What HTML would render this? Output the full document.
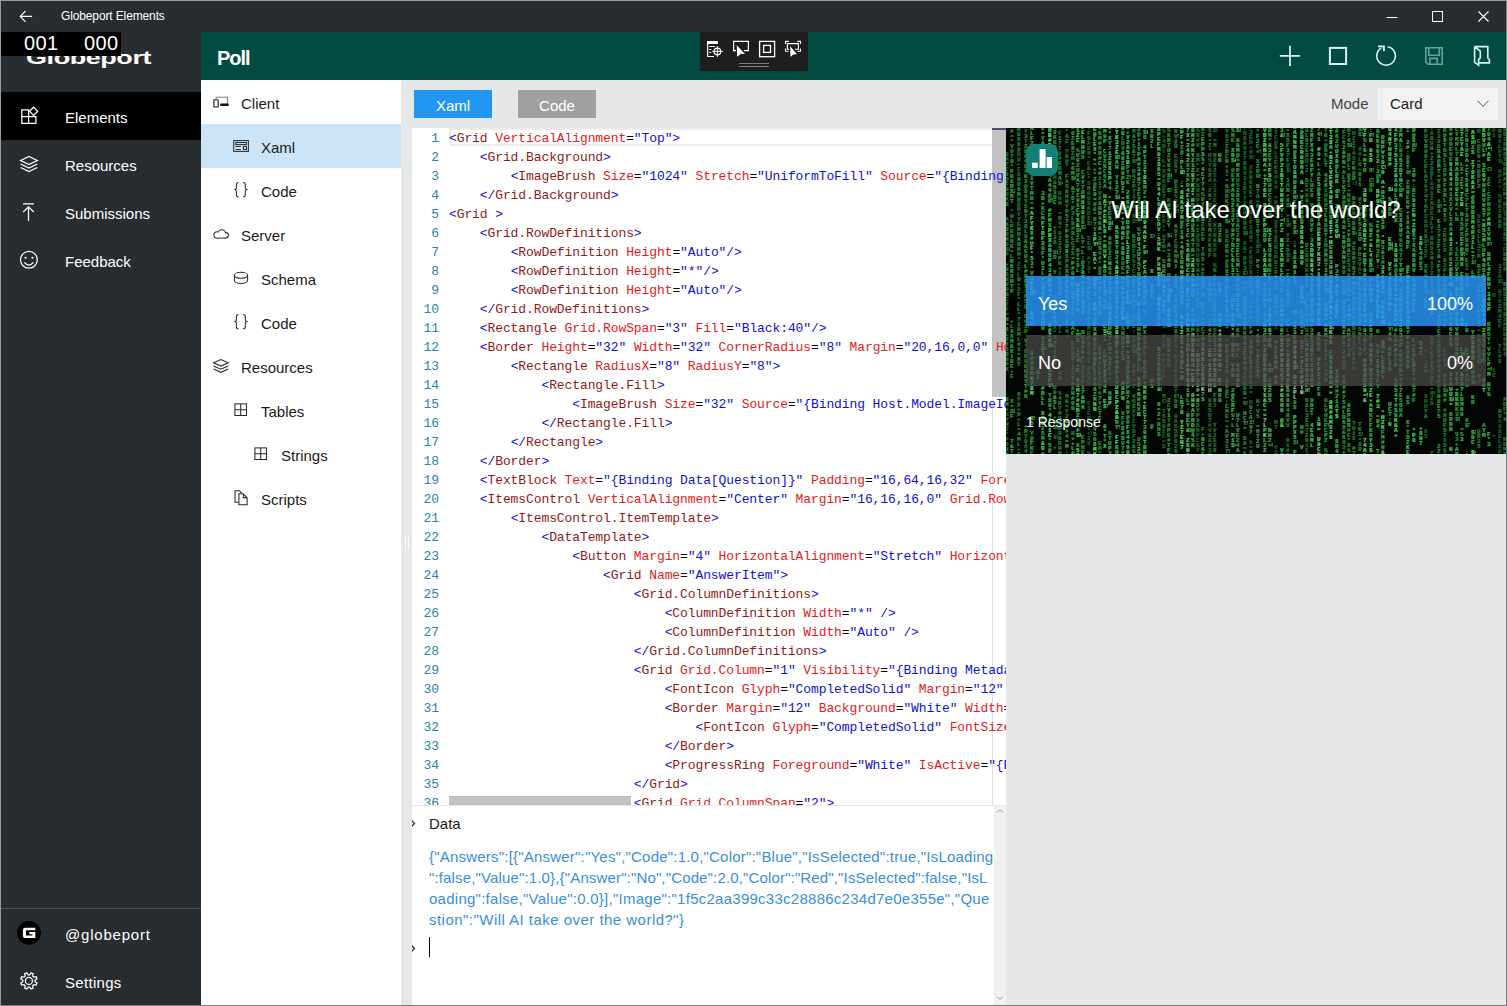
<!DOCTYPE html>
<html><head><meta charset="utf-8">
<style>
*{box-sizing:border-box;margin:0;padding:0}
html,body{width:1507px;height:1006px;overflow:hidden;background:#282d31;font-family:"Liberation Sans",sans-serif}
.a{position:absolute}
svg{position:absolute;overflow:visible}
#win{left:0;top:0;width:1507px;height:1006px;border:1px solid #959b9f;border-right-color:#7c7c7c;border-bottom-color:#7c7c7c}
#title{left:1px;top:1px;width:1505px;height:31px;background:#282d31;color:#fff}
#side{left:1px;top:32px;width:200px;height:973px;background:#282d31;color:#fff}
#hdr{left:201px;top:32px;width:1305px;height:48px;background:#034a40}
#tree{left:201px;top:80px;width:200px;height:925px;background:#fff}
#gray{left:401px;top:80px;width:1105px;height:925px;background:#e6e7e9}
#ed{left:412px;top:128px;width:594px;height:677px;background:#fff;overflow:hidden}
#data{left:412px;top:806px;width:594px;height:199px;background:#fff;overflow:hidden}
#card{left:1006px;top:128px;width:500px;height:326px;background:#020503;overflow:hidden}
.si{position:absolute;left:0;width:200px;height:48px}
.si .t{position:absolute;left:64px;top:17px;font-size:15px;line-height:18px;color:#fff}
.ti{position:absolute;left:0;width:200px;height:44px}
.ti .t{position:absolute;top:15px;font-size:15px;line-height:18px;color:#1b1b1b}
#code,#nums{position:absolute;top:1px;font-family:"Liberation Mono",monospace;font-size:13px;line-height:19px;letter-spacing:-0.1px;white-space:pre}
#code{left:37px;color:#000}
#nums{left:0;width:27px;text-align:right;color:#2a84a2;letter-spacing:0}
#code b{font-weight:normal;color:#1010d0}
#code i{font-style:normal;color:#8e1a1a}
#code u{text-decoration:none;color:#e01c1c}
#mx{position:absolute;left:0;top:0;width:500px;height:325px}
#mx p{position:absolute;top:0;width:6px;height:325px}
#mx i{position:absolute;left:0;width:5px;font:bold 6px/5px "Liberation Mono",monospace;text-shadow:0 0 1px currentColor;word-break:break-all;font-style:normal;overflow:hidden}
</style></head><body>
<div class="a" id="win"></div>
<div class="a" id="title">
  <svg style="left:18px;top:8px" width="14" height="14" viewBox="0 0 14 14"><path d="M13.1 7.4H1.2M6.6 2L1.2 7.4L6.6 12.8" stroke="#fff" stroke-width="1.1" fill="none"/></svg>
  <div class="a" style="left:60px;top:8px;font-size:12px;line-height:14px;letter-spacing:-0.13px">Globeport Elements</div>
  <!-- window controls -->
  <svg style="left:1384px;top:10px" width="14" height="14"><path d="M1.5 6.5H12.5" stroke="#fff" stroke-width="1"/></svg>
  <svg style="left:1430px;top:9px" width="14" height="14"><rect x="1.5" y="1.5" width="10" height="10" stroke="#fff" stroke-width="1" fill="none"/></svg>
  <svg style="left:1476px;top:9px" width="14" height="14"><path d="M1.5 1.5L11.5 11.5M11.5 1.5L1.5 11.5" stroke="#fff" stroke-width="1.1"/></svg>
</div>
<div class="a" id="side">
  <div class="a" style="left:25px;top:16px;font-size:19px;line-height:20px;font-weight:bold;color:#fff;transform:scaleX(1.42);transform-origin:0 0;letter-spacing:-0.3px">Globeport</div>
  <div class="a" style="left:0;top:0;width:120px;height:24px;background:#000"></div>
  <div class="a" style="left:23px;top:1px;font-size:20px;line-height:20px;color:#fff;letter-spacing:0.4px">001</div>
  <div class="a" style="left:83px;top:1px;font-size:20px;line-height:20px;color:#fff;letter-spacing:0.4px">000</div>
  <div class="si" style="top:60px;background:#000"><div class="t">Elements</div></div>
  <div class="si" style="top:108px"><div class="t">Resources</div></div>
  <div class="si" style="top:156px"><div class="t">Submissions</div></div>
  <div class="si" style="top:204px"><div class="t">Feedback</div></div>
  <div class="a" style="left:0;top:876px;width:200px;height:1px;background:#4a4e52"></div>
  <div class="si" style="top:878px"><div class="t" style="top:16px;letter-spacing:0.8px">@globeport</div></div>
  <div class="si" style="top:926px"><div class="t" style="top:16px;letter-spacing:0.3px">Settings</div></div>
</div>
<div class="a" id="hdr">
  <div class="a" style="left:16px;top:15px;font-size:20px;line-height:22px;color:#fff;font-weight:bold;letter-spacing:-1px">Poll</div>
</div>
<div class="a" id="tree">
  <div class="ti" style="top:0"><div class="t" style="left:40px">Client</div></div>
  <div class="ti" style="top:44px;background:#cce4f7"><div class="t" style="left:60px">Xaml</div></div>
  <div class="ti" style="top:88px"><div class="t" style="left:60px">Code</div></div>
  <div class="ti" style="top:132px"><div class="t" style="left:40px">Server</div></div>
  <div class="ti" style="top:176px"><div class="t" style="left:60px">Schema</div></div>
  <div class="ti" style="top:220px"><div class="t" style="left:60px">Code</div></div>
  <div class="ti" style="top:264px"><div class="t" style="left:40px">Resources</div></div>
  <div class="ti" style="top:308px"><div class="t" style="left:60px">Tables</div></div>
  <div class="ti" style="top:352px"><div class="t" style="left:80px">Strings</div></div>
  <div class="ti" style="top:396px"><div class="t" style="left:60px">Scripts</div></div>
</div>
<div class="a" id="gray">
  <div class="a" style="left:4px;top:455px;width:1px;height:15px;background:#fbfbfb"></div><div class="a" style="left:7px;top:455px;width:1px;height:15px;background:#fbfbfb"></div>
  <div class="a" style="left:13px;top:10px;width:78px;height:28px;background:#2196f3;color:#fff;font-size:15px;line-height:32px;text-align:center">Xaml</div>
  <div class="a" style="left:117px;top:10px;width:78px;height:28px;background:#a0a0a0;color:#fff;font-size:15px;line-height:32px;text-align:center">Code</div>
  <div class="a" style="left:930px;top:15px;font-size:15px;line-height:18px;color:#444">Mode</div>
  <div class="a" style="left:977px;top:8px;width:120px;height:32px;background:#f2f2f2"></div>
  <div class="a" style="left:989px;top:15px;font-size:15px;line-height:18px;color:#1b1b1b">Card</div>
  <svg style="left:1075px;top:19px" width="14" height="10"><path d="M1.5 1.8L7 7.3L12.5 1.8" stroke="#555" stroke-width="1" fill="none"/></svg>
</div>
<div class="a" id="ed">
  <div class="a" style="left:37px;top:0;width:557px;height:18px;border:2px solid #ececec;border-right:none"></div>
  <div class="a" style="left:580px;top:0;width:14px;height:269px;background:#c2c2c2;border-top:2px solid #4b4f68"></div>
  <div class="a" style="left:580px;top:269px;width:1px;height:408px;background:#e0e0e0"></div>
  <pre id="code"><b>&lt;</b><i>Grid</i> <u>VerticalAlignment</u>=<b>&quot;Top&quot;</b><b>&gt;</b>
    <b>&lt;</b><i>Grid.Background</i><b>&gt;</b>
        <b>&lt;</b><i>ImageBrush</i> <u>Size</u>=<b>&quot;1024&quot;</b> <u>Stretch</u>=<b>&quot;UniformToFill&quot;</b> <u>Source</u>=<b>&quot;{Binding Host.Model.ImageId}&quot;</b><b>/&gt;</b>
    <b>&lt;/</b><i>Grid.Background</i><b>&gt;</b>
<b>&lt;</b><i>Grid</i> <b>&gt;</b>
    <b>&lt;</b><i>Grid.RowDefinitions</i><b>&gt;</b>
        <b>&lt;</b><i>RowDefinition</i> <u>Height</u>=<b>&quot;Auto&quot;</b><b>/&gt;</b>
        <b>&lt;</b><i>RowDefinition</i> <u>Height</u>=<b>&quot;*&quot;</b><b>/&gt;</b>
        <b>&lt;</b><i>RowDefinition</i> <u>Height</u>=<b>&quot;Auto&quot;</b><b>/&gt;</b>
    <b>&lt;/</b><i>Grid.RowDefinitions</i><b>&gt;</b>
    <b>&lt;</b><i>Rectangle</i> <u>Grid.RowSpan</u>=<b>&quot;3&quot;</b> <u>Fill</u>=<b>&quot;Black:40&quot;</b><b>/&gt;</b>
    <b>&lt;</b><i>Border</i> <u>Height</u>=<b>&quot;32&quot;</b> <u>Width</u>=<b>&quot;32&quot;</b> <u>CornerRadius</u>=<b>&quot;8&quot;</b> <u>Margin</u>=<b>&quot;20,16,0,0&quot;</b> <u>HorizontalAlignment</u>=<b>&quot;Left&quot;</b><b>/&gt;</b>
        <b>&lt;</b><i>Rectangle</i> <u>RadiusX</u>=<b>&quot;8&quot;</b> <u>RadiusY</u>=<b>&quot;8&quot;</b><b>&gt;</b>
            <b>&lt;</b><i>Rectangle.Fill</i><b>&gt;</b>
                <b>&lt;</b><i>ImageBrush</i> <u>Size</u>=<b>&quot;32&quot;</b> <u>Source</u>=<b>&quot;{Binding Host.Model.ImageId}&quot;</b><b>/&gt;</b>
            <b>&lt;/</b><i>Rectangle.Fill</i><b>&gt;</b>
        <b>&lt;/</b><i>Rectangle</i><b>&gt;</b>
    <b>&lt;/</b><i>Border</i><b>&gt;</b>
    <b>&lt;</b><i>TextBlock</i> <u>Text</u>=<b>&quot;{Binding Data[Question]}&quot;</b> <u>Padding</u>=<b>&quot;16,64,16,32&quot;</b> <u>Foreground</u>=<b>&quot;White&quot;</b><b>/&gt;</b>
    <b>&lt;</b><i>ItemsControl</i> <u>VerticalAlignment</u>=<b>&quot;Center&quot;</b> <u>Margin</u>=<b>&quot;16,16,16,0&quot;</b> <u>Grid.Row</u>=<b>&quot;1&quot;</b><b>&gt;</b>
        <b>&lt;</b><i>ItemsControl.ItemTemplate</i><b>&gt;</b>
            <b>&lt;</b><i>DataTemplate</i><b>&gt;</b>
                <b>&lt;</b><i>Button</i> <u>Margin</u>=<b>&quot;4&quot;</b> <u>HorizontalAlignment</u>=<b>&quot;Stretch&quot;</b> <u>HorizontalContentAlignment</u>=<b>&quot;Stretch&quot;</b><b>&gt;</b>
                    <b>&lt;</b><i>Grid</i> <u>Name</u>=<b>&quot;AnswerItem&quot;</b><b>&gt;</b>
                        <b>&lt;</b><i>Grid.ColumnDefinitions</i><b>&gt;</b>
                            <b>&lt;</b><i>ColumnDefinition</i> <u>Width</u>=<b>&quot;*&quot;</b> <b>/&gt;</b>
                            <b>&lt;</b><i>ColumnDefinition</i> <u>Width</u>=<b>&quot;Auto&quot;</b> <b>/&gt;</b>
                        <b>&lt;/</b><i>Grid.ColumnDefinitions</i><b>&gt;</b>
                        <b>&lt;</b><i>Grid</i> <u>Grid.Column</u>=<b>&quot;1&quot;</b> <u>Visibility</u>=<b>&quot;{Binding Metadata}&quot;</b><b>&gt;</b>
                            <b>&lt;</b><i>FontIcon</i> <u>Glyph</u>=<b>&quot;CompletedSolid&quot;</b> <u>Margin</u>=<b>&quot;12&quot;</b> <b>/&gt;</b>
                            <b>&lt;</b><i>Border</i> <u>Margin</u>=<b>&quot;12&quot;</b> <u>Background</u>=<b>&quot;White&quot;</b> <u>Width</u>=<b>&quot;16&quot;</b><b>&gt;</b>
                                <b>&lt;</b><i>FontIcon</i> <u>Glyph</u>=<b>&quot;CompletedSolid&quot;</b> <u>FontSize</u>=<b>&quot;16&quot;</b><b>/&gt;</b>
                            <b>&lt;/</b><i>Border</i><b>&gt;</b>
                            <b>&lt;</b><i>ProgressRing</i> <u>Foreground</u>=<b>&quot;White&quot;</b> <u>IsActive</u>=<b>&quot;{Binding}&quot;</b><b>/&gt;</b>
                        <b>&lt;/</b><i>Grid</i><b>&gt;</b>
                        <b>&lt;</b><i>Grid</i> <u>Grid.ColumnSpan</u>=<b>&quot;2&quot;</b><b>&gt;</b></pre>
<pre id="nums">1
2
3
4
5
6
7
8
9
10
11
12
13
14
15
16
17
18
19
20
21
22
23
24
25
26
27
28
29
30
31
32
33
34
35
36</pre>

  <div class="a" style="left:37px;top:668px;width:182px;height:9px;background:#c2c2c2"></div>
</div>
<div class="a" id="data">
  <div class="a" style="left:0;top:-1px;width:594px;height:1px;background:#9c9c9c"></div>
  <div class="a" style="left:582px;top:0;width:12px;height:199px;background:#f0f0f0"></div>
  <svg style="left:584px;top:2px" width="8" height="6"><path d="M1 4.5L4 1.5L7 4.5" stroke="#9a9a9a" stroke-width="1" fill="none"/></svg>
  <svg style="left:584px;top:189px" width="8" height="6"><path d="M1 1.5L4 4.5L7 1.5" stroke="#9a9a9a" stroke-width="1" fill="none"/></svg>
  <svg style="left:-3px;top:12px" width="8" height="12"><path d="M1.8 1.8L5.5 5.5L1.8 9.2" stroke="#333" stroke-width="1.3" fill="none"/></svg>
  <div class="a" style="left:17px;top:9px;font-size:15px;line-height:18px;color:#1b1b1b">Data</div>
  <div class="a" id="json" style="left:17px;top:40px;width:590px;font-size:15px;line-height:21px;color:#3a8fd8;white-space:pre"><span style="letter-spacing:0.21px">{"Answers":[{"Answer":"Yes","Code":1.0,"Color":"Blue","IsSelected":true,"IsLoading</span>
<span style="letter-spacing:0.15px">":false,"Value":1.0},{"Answer":"No","Code":2.0,"Color":"Red","IsSelected":false,"IsL</span>
<span style="letter-spacing:0.26px">oading":false,"Value":0.0}],"Image":"1f5c2aa399c33c28886c234d7e0e355e","Que</span>
<span style="letter-spacing:0.47px">stion":"Will AI take over the world?"}</span></div>
  <svg style="left:-3px;top:137px" width="8" height="12"><path d="M1.8 1.8L5.5 5.5L1.8 9.2" stroke="#333" stroke-width="1.3" fill="none"/></svg>
  <div class="a" style="left:17px;top:131px;width:1px;height:20px;background:#000"></div>
</div>
<div class="a" id="card">
  <div id="mx"><p style="left:-1px"><i style="top:24px;height:20px;color:#1f6d2a">3A7T</i><i style="top:44px;height:20px;color:#21722c">6@F0</i><i style="top:64px;height:10px;color:#1e6b29">UA</i><i style="top:74px;height:5px;color:#247b31">8</i><i style="top:89px;height:5px;color:#1f6c29">A</i><i style="top:94px;height:10px;color:#2a8837">%D</i><i style="top:104px;height:10px;color:#267e32">UM</i><i style="top:114px;height:5px;color:#1e6a28">9</i><i style="top:119px;height:15px;color:#206f2b">$0P</i><i style="top:134px;height:5px;color:#288335">+</i><i style="top:139px;height:15px;color:#22762e">B3H</i><i style="top:154px;height:5px;color:#21722c">V</i><i style="top:159px;height:5px;color:#22742d">U</i><i style="top:164px;height:25px;color:#22752e">BC7F=</i><i style="top:189px;height:15px;color:#298536">H=6</i><i style="top:204px;height:25px;color:#278234">L2Y5D</i><i style="top:229px;height:15px;color:#21722c">9PK</i><i style="top:269px;height:15px;color:#278234">9M+</i><i style="top:284px;height:10px;color:#1d6727">%V</i><i style="top:294px;height:5px;color:#247a30">H</i><i style="top:299px;height:20px;color:#1e6a28">2*PD</i><i style="top:319px;height:10px;color:#247930">8X</i></p><p style="left:4px"><i style="top:-4px;height:20px;color:#298536">A#=*</i><i style="top:16px;height:15px;color:#267e32">V97</i><i style="top:31px;height:20px;color:#2a8938">B*PB</i><i style="top:51px;height:5px;color:#2a8837">&</i><i style="top:56px;height:25px;color:#30953e">R$2MT</i><i style="top:81px;height:25px;color:#267e32">*HLPB</i><i style="top:106px;height:25px;color:#298636">HNK=L</i><i style="top:131px;height:25px;color:#30953f">RKRXR</i><i style="top:156px;height:10px;color:#2d903c">TP</i><i style="top:191px;height:10px;color:#278134">+L</i><i style="top:201px;height:5px;color:#2e923d">A</i><i style="top:206px;height:25px;color:#2b8b39">XM&K1</i><i style="top:231px;height:10px;color:#298536">BE</i><i style="top:241px;height:10px;color:#21732d">+E</i><i style="top:271px;height:10px;color:#2b8a38">X=</i><i style="top:281px;height:15px;color:#2c8d3a">$DF</i><i style="top:311px;height:20px;color:#319840">7&T2</i></p><p style="left:11px"><i style="top:-1px;height:25px;color:#267e32">R8XX@</i><i style="top:24px;height:25px;color:#1f6d2a">U@+C8</i><i style="top:49px;height:25px;color:#2a8837">0U6N@</i><i style="top:74px;height:25px;color:#22742d">@UYYE</i><i style="top:99px;height:20px;color:#2c8e3b">UUAH</i><i style="top:119px;height:15px;color:#23782f">NM*</i><i style="top:134px;height:15px;color:#1d6828">ZFL</i><i style="top:149px;height:5px;color:#2a8837">0</i><i style="top:154px;height:20px;color:#21722c">+2F*</i><i style="top:174px;height:15px;color:#288435">LL*</i><i style="top:189px;height:25px;color:#257c31">718ML</i><i style="top:214px;height:25px;color:#268033">#1=RT</i><i style="top:264px;height:5px;color:#247930">6</i><i style="top:269px;height:25px;color:#23782f">Y@+U+</i><i style="top:294px;height:20px;color:#288435">L=4M</i><i style="top:314px;height:5px;color:#23782f">L</i><i style="top:319px;height:20px;color:#1f6d2a">+&*P</i></p><p style="left:18px"><i style="top:-4px;height:5px;color:#247b31">5</i><i style="top:1px;height:5px;color:#20712c">Y</i><i style="top:6px;height:5px;color:#2d903c">3</i><i style="top:11px;height:5px;color:#247a30">7</i><i style="top:16px;height:10px;color:#2d903c">Z9</i><i style="top:26px;height:10px;color:#288335">A4</i><i style="top:36px;height:25px;color:#2a8938">U4K3@</i><i style="top:61px;height:25px;color:#278234">80Y5N</i><i style="top:86px;height:25px;color:#268033">T38L9</i><i style="top:111px;height:25px;color:#298737">&&EH4</i><i style="top:136px;height:25px;color:#30963f">L#8FT</i><i style="top:161px;height:20px;color:#23782f">1P5@</i><i style="top:186px;height:5px;color:#288536">U</i><i style="top:191px;height:20px;color:#267f33">#1%U</i><i style="top:211px;height:5px;color:#329b42">Y</i><i style="top:216px;height:10px;color:#22742d">*D</i><i style="top:226px;height:10px;color:#278134">FL</i><i style="top:236px;height:15px;color:#2d903c">UU8</i><i style="top:251px;height:15px;color:#2f943e">YT#</i><i style="top:266px;height:5px;color:#2b8a38">B</i><i style="top:296px;height:10px;color:#298636">+R</i><i style="top:306px;height:5px;color:#267e32">Y</i><i style="top:311px;height:15px;color:#22752e">9A4</i></p><p style="left:24px"><i style="top:-2px;height:25px;color:#36a246">ALF2+</i><i style="top:23px;height:5px;color:#46c159">N</i><i style="top:28px;height:5px;color:#43bc56">+</i><i style="top:33px;height:10px;color:#43bb56">L=</i><i style="top:43px;height:10px;color:#329a41">C1</i><i style="top:53px;height:25px;color:#2f943e">VTMB=</i><i style="top:78px;height:15px;color:#45c059">=AF</i><i style="top:93px;height:10px;color:#4dcd62">YK</i><i style="top:103px;height:5px;color:#3bad4d">X</i><i style="top:108px;height:10px;color:#3fb350">#@</i><i style="top:118px;height:15px;color:#45be58">F*5</i><i style="top:133px;height:20px;color:#349f44">3*V3</i><i style="top:153px;height:5px;color:#3aaa4b">M</i><i style="top:158px;height:5px;color:#4ece62">C</i><i style="top:163px;height:10px;color:#42b954">C%</i><i style="top:183px;height:15px;color:#30953f">A4D</i><i style="top:223px;height:25px;color:#3aab4b">U#80M</i><i style="top:248px;height:20px;color:#4fd164">&78M</i><i style="top:288px;height:15px;color:#37a447">8%5</i><i style="top:303px;height:20px;color:#30953e">Y@FK</i><i style="top:323px;height:5px;color:#35a045">C</i></p><p style="left:30px"><i style="top:242px;height:10px;color:#3cae4d">H1</i></p><p style="left:35px"><i style="top:-2px;height:20px;color:#329b42">E=YA</i><i style="top:18px;height:20px;color:#3db14f">A%+*</i><i style="top:63px;height:10px;color:#36a246">3D</i><i style="top:73px;height:5px;color:#3aab4b">+</i><i style="top:78px;height:15px;color:#30953f">KCM</i><i style="top:93px;height:25px;color:#41b753">FTRF3</i><i style="top:118px;height:25px;color:#339d43">9F*U2</i><i style="top:143px;height:5px;color:#2c8e3b">L</i><i style="top:148px;height:10px;color:#40b652">++</i><i style="top:158px;height:25px;color:#42b954">U06:$</i><i style="top:183px;height:25px;color:#35a045">N1M:U</i><i style="top:208px;height:25px;color:#3eb350">VZ$&3</i><i style="top:258px;height:20px;color:#3bac4c">#DLL</i><i style="top:283px;height:15px;color:#44bd57">XM0</i><i style="top:298px;height:15px;color:#30963f">25M</i><i style="top:313px;height:15px;color:#43bb55">&D+</i></p><p style="left:42px"><i style="top:-5px;height:25px;color:#50d265">UUB#D</i><i style="top:20px;height:25px;color:#38a749">&TF6D</i><i style="top:45px;height:15px;color:#36a347">4A4</i><i style="top:60px;height:20px;color:#35a045">4@@%</i><i style="top:80px;height:20px;color:#3cae4d">#FMX</i><i style="top:100px;height:15px;color:#4dcd61">PBX</i><i style="top:115px;height:5px;color:#37a548">&</i><i style="top:120px;height:25px;color:#3cae4d">N6P43</i><i style="top:145px;height:20px;color:#3fb451">4NC=</i><i style="top:165px;height:20px;color:#35a145">+60C</i><i style="top:195px;height:15px;color:#43bb55">6@Z</i><i style="top:210px;height:15px;color:#4ac75d">&$6</i><i style="top:240px;height:5px;color:#38a749">B</i><i style="top:245px;height:20px;color:#51d466">5FV%</i><i style="top:265px;height:20px;color:#329941">T80*</i><i style="top:285px;height:20px;color:#4fd164">4*L1</i><i style="top:305px;height:5px;color:#51d466">C</i><i style="top:310px;height:15px;color:#37a548">*5@</i></p><p style="left:47px"><i style="top:-3px;height:5px;color:#20712c">X</i><i style="top:2px;height:10px;color:#2d8f3b">9K</i><i style="top:12px;height:5px;color:#278234">B</i><i style="top:17px;height:25px;color:#30953e">F5ZR8</i><i style="top:47px;height:10px;color:#20702b">H&</i><i style="top:57px;height:20px;color:#30953f">53DC</i><i style="top:97px;height:25px;color:#247b31">+:13A</i><i style="top:122px;height:20px;color:#298536">$$2D</i><i style="top:142px;height:5px;color:#2d8f3b">Y</i><i style="top:167px;height:10px;color:#22762e">CY</i><i style="top:177px;height:5px;color:#247930">X</i><i style="top:182px;height:10px;color:#288435">L0</i><i style="top:192px;height:5px;color:#2e913c">4</i><i style="top:197px;height:5px;color:#20712c">X</i><i style="top:202px;height:10px;color:#20702b">*N</i><i style="top:212px;height:25px;color:#288435">4T10B</i><i style="top:257px;height:10px;color:#267f33">D9</i><i style="top:267px;height:15px;color:#329a41">&5L</i><i style="top:287px;height:20px;color:#267f33">+&$Z</i><i style="top:307px;height:10px;color:#22752e">1%</i><i style="top:317px;height:5px;color:#22752e">+</i></p><p style="left:52px"><i style="top:-2px;height:10px;color:#1c6526">:F</i><i style="top:8px;height:5px;color:#288335">1</i><i style="top:13px;height:25px;color:#21732d">7T@#K</i><i style="top:38px;height:25px;color:#298536">UMA$4</i><i style="top:63px;height:20px;color:#1e6a28">U6:M</i><i style="top:83px;height:25px;color:#20712c">=R4*0</i><i style="top:108px;height:25px;color:#23772f">2357P</i><i style="top:133px;height:10px;color:#206f2b">K+</i><i style="top:143px;height:10px;color:#1f6c29">1H</i><i style="top:153px;height:20px;color:#267f33">H$ZB</i><i style="top:198px;height:5px;color:#206f2b">7</i><i style="top:203px;height:5px;color:#257c31">*</i><i style="top:233px;height:25px;color:#247930">E%74$</i><i style="top:263px;height:20px;color:#22762e">%4K7</i><i style="top:283px;height:20px;color:#1f6c29">MM0N</i><i style="top:303px;height:25px;color:#22752e">U9DHN</i></p><p style="left:59px"><i style="top:-4px;height:5px;color:#298737">#</i><i style="top:1px;height:20px;color:#247930">*A:Z</i><i style="top:21px;height:25px;color:#21732d">YK@*:</i><i style="top:46px;height:25px;color:#257d32">FAX&H</i><i style="top:71px;height:15px;color:#23772f">HYR</i><i style="top:86px;height:25px;color:#2d903c">577P6</i><i style="top:111px;height:5px;color:#268033">$</i><i style="top:116px;height:10px;color:#35a045">UB</i><i style="top:126px;height:15px;color:#267f33">XP6</i><i style="top:141px;height:15px;color:#2f943e">XX4</i><i style="top:156px;height:5px;color:#247b31">6</i><i style="top:161px;height:25px;color:#2a8837">4EX1@</i><i style="top:186px;height:25px;color:#23772f">:NT4=</i><i style="top:266px;height:25px;color:#23782f">M&=Y2</i><i style="top:291px;height:10px;color:#35a045">8U</i><i style="top:301px;height:10px;color:#278234">#4</i><i style="top:311px;height:10px;color:#329a41">=M</i><i style="top:321px;height:20px;color:#319840">:HLA</i></p><p style="left:65px"><i style="top:-2px;height:25px;color:#2d8f3b">=6ZE8</i><i style="top:23px;height:10px;color:#23782f">ZH</i><i style="top:33px;height:25px;color:#2f933d">+6M$H</i><i style="top:58px;height:15px;color:#2c8d3a">&7D</i><i style="top:73px;height:5px;color:#2d8f3b">*</i><i style="top:78px;height:25px;color:#278134">P3L8#</i><i style="top:103px;height:20px;color:#288536">8LC2</i><i style="top:123px;height:5px;color:#247b31">X</i><i style="top:128px;height:15px;color:#329b42">=P#</i><i style="top:143px;height:25px;color:#2f943e">0A@*0</i><i style="top:168px;height:25px;color:#319840">T2E%0</i><i style="top:193px;height:20px;color:#30963f">AA:F</i><i style="top:213px;height:20px;color:#298636">EK0D</i><i style="top:233px;height:10px;color:#30963f">:T</i><i style="top:243px;height:20px;color:#267e32">6T&&</i><i style="top:263px;height:20px;color:#30963f">H#09</i><i style="top:303px;height:5px;color:#257c31">B</i><i style="top:308px;height:20px;color:#349e44">++L#</i></p><p style="left:70px"><i style="top:-5px;height:25px;color:#43bb56">D1Z:C</i><i style="top:20px;height:5px;color:#30953e">%</i><i style="top:25px;height:15px;color:#2f933d">V02</i><i style="top:40px;height:20px;color:#2f943e">UVA7</i><i style="top:60px;height:20px;color:#30963f">VZ9X</i><i style="top:80px;height:5px;color:#39a84a">C</i><i style="top:85px;height:15px;color:#44be57">YX&</i><i style="top:100px;height:20px;color:#30953e">$H2C</i><i style="top:120px;height:25px;color:#2e923d">6YT9L</i><i style="top:155px;height:10px;color:#47c25a">0&</i><i style="top:165px;height:20px;color:#43bb56">N5*9</i><i style="top:200px;height:5px;color:#349f44">+</i><i style="top:205px;height:15px;color:#37a447">P%X</i><i style="top:220px;height:10px;color:#3aaa4b">1E</i><i style="top:230px;height:20px;color:#42ba55">4%+E</i><i style="top:250px;height:5px;color:#3bad4d">6</i><i style="top:255px;height:5px;color:#35a145">N</i><i style="top:260px;height:15px;color:#41b854">M7#</i><i style="top:275px;height:5px;color:#44be57">5</i><i style="top:280px;height:5px;color:#44be57">D</i><i style="top:285px;height:20px;color:#36a246">Z@4#</i><i style="top:305px;height:10px;color:#43bb56">$M</i><i style="top:315px;height:5px;color:#329a41">6</i><i style="top:320px;height:10px;color:#47c25a">5P</i></p><p style="left:75px"><i style="top:-3px;height:5px;color:#349f44">2</i><i style="top:2px;height:20px;color:#41b753">ELMH</i><i style="top:22px;height:20px;color:#349f44">R::5</i><i style="top:42px;height:25px;color:#339c42">CVY78</i><i style="top:67px;height:5px;color:#3fb451">M</i><i style="top:72px;height:15px;color:#41b854">6B0</i><i style="top:87px;height:20px;color:#2f943e">@6$3</i><i style="top:107px;height:5px;color:#2f933d">L</i><i style="top:112px;height:15px;color:#2d8f3b">Y=L</i><i style="top:127px;height:10px;color:#35a045">:@</i><i style="top:137px;height:20px;color:#38a648">2BT+</i><i style="top:157px;height:15px;color:#298737">ZKT</i><i style="top:172px;height:15px;color:#41b854">UVZ</i><i style="top:202px;height:25px;color:#2e923d">BX0VN</i><i style="top:227px;height:15px;color:#2b8b39">#=7</i><i style="top:242px;height:15px;color:#2c8d3a">CVF</i><i style="top:257px;height:20px;color:#39a84a">17&M</i><i style="top:277px;height:5px;color:#37a548">A</i><i style="top:307px;height:20px;color:#288536">EPNE</i></p><p style="left:81px"><i style="top:-2px;height:10px;color:#1c6627">7F</i><i style="top:8px;height:5px;color:#1d6827">$</i><i style="top:13px;height:15px;color:#185a21">AKM</i><i style="top:28px;height:5px;color:#185a21">*</i><i style="top:33px;height:5px;color:#1a6024">E</i><i style="top:38px;height:5px;color:#1c6627">&</i><i style="top:43px;height:10px;color:#1b6225">L*</i><i style="top:53px;height:5px;color:#16541f">9</i><i style="top:58px;height:5px;color:#1f6c29">N</i><i style="top:63px;height:15px;color:#1b6325">00$</i><i style="top:78px;height:15px;color:#195d23">KD$</i><i style="top:93px;height:15px;color:#1c6526">$$C</i><i style="top:108px;height:10px;color:#1b6225">5E</i><i style="top:118px;height:10px;color:#1c6526">$D</i><i style="top:128px;height:15px;color:#175720">A7$</i><i style="top:143px;height:25px;color:#1d6727">*EZMH</i><i style="top:168px;height:5px;color:#1b6325">%</i><i style="top:173px;height:5px;color:#1c6426">@</i><i style="top:178px;height:20px;color:#1f6d2a">0M0&</i><i style="top:198px;height:10px;color:#1c6526">MU</i><i style="top:208px;height:15px;color:#1e6a28">P8C</i><i style="top:223px;height:20px;color:#1c6426">61*B</i><i style="top:243px;height:15px;color:#185921">AKV</i><i style="top:273px;height:15px;color:#175620">F1E</i><i style="top:288px;height:15px;color:#195d23">H4+</i><i style="top:303px;height:20px;color:#175720">+%3V</i><i style="top:323px;height:25px;color:#185921">HP:BT</i></p><p style="left:87px"><i style="top:-1px;height:10px;color:#41b853">E@</i><i style="top:9px;height:25px;color:#3fb552">LEX*+</i><i style="top:34px;height:25px;color:#30963f">=+*Z@</i><i style="top:59px;height:10px;color:#349f44">E9</i><i style="top:69px;height:5px;color:#38a749">=</i><i style="top:74px;height:25px;color:#2c8c3a">90*87</i><i style="top:99px;height:5px;color:#2d8f3b">Y</i><i style="top:104px;height:20px;color:#49c75d">1PY%</i><i style="top:124px;height:25px;color:#47c25a">EA*:*</i><i style="top:149px;height:25px;color:#43bc56">$N0*2</i><i style="top:174px;height:10px;color:#49c65d">KM</i><i style="top:184px;height:10px;color:#329a41">4@</i><i style="top:194px;height:20px;color:#39a94a">PXHD</i><i style="top:214px;height:15px;color:#349f44">9FN</i><i style="top:229px;height:15px;color:#49c65d">RFL</i><i style="top:244px;height:5px;color:#39a94a">7</i><i style="top:249px;height:25px;color:#339c43">966ZM</i><i style="top:274px;height:10px;color:#47c25a">NN</i><i style="top:294px;height:20px;color:#2e923d">#V56</i><i style="top:314px;height:5px;color:#3cae4d">8</i><i style="top:319px;height:10px;color:#4ac85e">MK</i></p><p style="left:92px"><i style="top:-2px;height:20px;color:#2e923d">+6M#</i><i style="top:18px;height:5px;color:#288335">6</i><i style="top:23px;height:25px;color:#339d43">U#C+#</i><i style="top:48px;height:25px;color:#23772f">117VX</i><i style="top:73px;height:5px;color:#298536">&</i><i style="top:78px;height:10px;color:#329941">HD</i><i style="top:88px;height:10px;color:#298636">4K</i><i style="top:98px;height:5px;color:#339c42">&</i><i style="top:103px;height:15px;color:#288435">=3B</i><i style="top:118px;height:5px;color:#2a8837">$</i><i style="top:123px;height:10px;color:#247b31">4#</i><i style="top:133px;height:20px;color:#288435">*@8Z</i><i style="top:153px;height:10px;color:#298636">=M</i><i style="top:163px;height:5px;color:#267f33">T</i><i style="top:168px;height:25px;color:#2e913c">4:KTM</i><i style="top:218px;height:15px;color:#2f943e">EU#</i><i style="top:233px;height:20px;color:#257c31">XEB1</i><i style="top:253px;height:15px;color:#22752e">CY#</i><i style="top:268px;height:25px;color:#2d8f3b">7YCTE</i><i style="top:313px;height:5px;color:#267e32">E</i><i style="top:318px;height:15px;color:#267f33">M*N</i></p><p style="left:97px"><i style="top:-4px;height:5px;color:#38a648">5</i><i style="top:1px;height:20px;color:#37a447">M9P:</i><i style="top:21px;height:20px;color:#339b42">CVZK</i><i style="top:41px;height:25px;color:#2e923d">C6XA:</i><i style="top:66px;height:5px;color:#41b753">H</i><i style="top:71px;height:5px;color:#4bca5f">&</i><i style="top:76px;height:15px;color:#44be57">7#E</i><i style="top:91px;height:10px;color:#50d265">NL</i><i style="top:101px;height:10px;color:#45c059">8+</i><i style="top:111px;height:15px;color:#3aab4b">=NH</i><i style="top:126px;height:15px;color:#4fd164">V+&</i><i style="top:141px;height:10px;color:#30953f">65</i><i style="top:151px;height:25px;color:#3aab4c">6T8*X</i><i style="top:176px;height:5px;color:#39a94a">@</i><i style="top:196px;height:25px;color:#42ba55">C$@7*</i><i style="top:221px;height:10px;color:#30953e">L8</i><i style="top:231px;height:25px;color:#47c35b">U78Z4</i><i style="top:256px;height:10px;color:#3cae4d">4K</i><i style="top:271px;height:25px;color:#41b853">E$Y:$</i><i style="top:296px;height:20px;color:#35a045">&*T*</i><i style="top:316px;height:5px;color:#42ba55">X</i></p><p style="left:102px"><i style="top:-2px;height:15px;color:#36a347">+*X</i><i style="top:13px;height:10px;color:#339c43">Y7</i><i style="top:23px;height:5px;color:#3fb451">1</i><i style="top:28px;height:10px;color:#3eb350">Z8</i><i style="top:38px;height:15px;color:#44bd57">X5P</i><i style="top:53px;height:15px;color:#2d8f3b">44:</i><i style="top:68px;height:10px;color:#44bd57">*Y</i><i style="top:78px;height:15px;color:#3aab4b">CC5</i><i style="top:93px;height:15px;color:#3fb350">$UE</i><i style="top:108px;height:25px;color:#2d8f3b">90CZC</i><i style="top:133px;height:5px;color:#3db04f">H</i><i style="top:138px;height:20px;color:#2b8c39">&4NB</i><i style="top:158px;height:25px;color:#2b8a38">@41@N</i><i style="top:183px;height:5px;color:#37a447">0</i><i style="top:188px;height:25px;color:#3bac4c">1FUR7</i><i style="top:213px;height:5px;color:#3eb250">+</i><i style="top:218px;height:15px;color:#339d43">@=$</i><i style="top:233px;height:10px;color:#2f933d">BC</i><i style="top:243px;height:5px;color:#349f44">+</i><i style="top:248px;height:5px;color:#319840">+</i><i style="top:263px;height:5px;color:#35a145">9</i><i style="top:268px;height:10px;color:#43bc56">BP</i><i style="top:303px;height:15px;color:#2f933d">%TB</i><i style="top:318px;height:20px;color:#37a548">P3A#</i></p><p style="left:109px"><i style="top:-3px;height:5px;color:#57de6d">7</i><i style="top:2px;height:25px;color:#4dcd62">TK3ZE</i><i style="top:27px;height:20px;color:#39a94a">B%AH</i><i style="top:47px;height:15px;color:#38a749">Y12</i><i style="top:62px;height:15px;color:#39a94a">7$0</i><i style="top:77px;height:20px;color:#47c25a">N:7P</i><i style="top:97px;height:20px;color:#3fb451">&5M$</i><i style="top:117px;height:20px;color:#38a749">YH24</i><i style="top:137px;height:15px;color:#51d466">&HC</i><i style="top:152px;height:5px;color:#4fd063">H</i><i style="top:157px;height:10px;color:#349e44">5A</i><i style="top:167px;height:15px;color:#36a246">&H$</i><i style="top:182px;height:15px;color:#35a145">LVZ</i><i style="top:197px;height:20px;color:#57de6d">58D@</i><i style="top:217px;height:15px;color:#39a94a">FKU</i><i style="top:232px;height:10px;color:#40b652">U8</i><i style="top:242px;height:15px;color:#349e44">PAV</i><i style="top:257px;height:5px;color:#49c65d">U</i><i style="top:262px;height:5px;color:#46c059">B</i><i style="top:267px;height:5px;color:#43bc56">C</i><i style="top:272px;height:5px;color:#51d466">P</i><i style="top:277px;height:15px;color:#55da6b">Z&0</i><i style="top:292px;height:15px;color:#349f44">RT%</i><i style="top:307px;height:10px;color:#4ac85e">FF</i><i style="top:317px;height:10px;color:#36a347">BH</i></p><p style="left:115px"><i style="top:-2px;height:10px;color:#339c43">9B</i><i style="top:8px;height:15px;color:#267f33">LDV</i><i style="top:23px;height:25px;color:#35a045">08ZH9</i><i style="top:48px;height:5px;color:#319840">P</i><i style="top:53px;height:10px;color:#38a648">DZ</i><i style="top:63px;height:10px;color:#3eb250">*=</i><i style="top:73px;height:5px;color:#38a749">K</i><i style="top:78px;height:5px;color:#298737">6</i><i style="top:83px;height:5px;color:#319740">=</i><i style="top:88px;height:10px;color:#39a94a">+Y</i><i style="top:98px;height:20px;color:#3cae4d">MNF+</i><i style="top:118px;height:5px;color:#3aab4b">8</i><i style="top:123px;height:5px;color:#3bac4c">R</i><i style="top:128px;height:25px;color:#288335">&UE=5</i><i style="top:153px;height:25px;color:#35a045">*FPYV</i><i style="top:178px;height:10px;color:#3aab4b">@E</i><i style="top:188px;height:10px;color:#37a447">N%</i><i style="top:198px;height:20px;color:#2d8f3b">%HRH</i><i style="top:218px;height:15px;color:#35a145">TC3</i><i style="top:253px;height:20px;color:#3caf4e">A0PN</i><i style="top:283px;height:15px;color:#2c8c3a">VFF</i><i style="top:298px;height:25px;color:#329b42">8#DV7</i><i style="top:323px;height:10px;color:#329b42">Y2</i></p><p style="left:120px"><i style="top:-3px;height:10px;color:#38a749">1+</i><i style="top:7px;height:15px;color:#3bad4d">V2A</i><i style="top:22px;height:15px;color:#48c45b">51B</i><i style="top:37px;height:25px;color:#2c8d3a">PYZ%K</i><i style="top:62px;height:25px;color:#37a548">2K6AC</i><i style="top:87px;height:20px;color:#3bac4c">1D9@</i><i style="top:107px;height:5px;color:#30953e">&</i><i style="top:112px;height:15px;color:#4ac85e">L3Z</i><i style="top:127px;height:10px;color:#4ac85e">RF</i><i style="top:137px;height:25px;color:#39a84a">AF@@*</i><i style="top:162px;height:20px;color:#41b854">EE$9</i><i style="top:182px;height:25px;color:#349f44">:EN%Y</i><i style="top:207px;height:25px;color:#48c45b">BM*=3</i><i style="top:232px;height:15px;color:#3aab4b">305</i><i style="top:247px;height:10px;color:#3aab4b">KD</i><i style="top:257px;height:10px;color:#329b42">PB</i><i style="top:267px;height:20px;color:#36a246">7ARV</i><i style="top:287px;height:10px;color:#339b42">@#</i><i style="top:297px;height:25px;color:#39a94a">FX449</i><i style="top:322px;height:25px;color:#3db04e">8YDVY</i></p><p style="left:126px"><i style="top:-4px;height:25px;color:#22762e">KM&Y$</i><i style="top:21px;height:5px;color:#257d32">&</i><i style="top:26px;height:15px;color:#23772f">79%</i><i style="top:41px;height:15px;color:#267e32">D42</i><i style="top:56px;height:20px;color:#20702b">P711</i><i style="top:76px;height:5px;color:#1b6124">H</i><i style="top:81px;height:20px;color:#1a5f23">:P3%</i><i style="top:106px;height:15px;color:#247b31">BXR</i><i style="top:121px;height:25px;color:#1b6325">FRAYC</i><i style="top:146px;height:25px;color:#20702b">HNZ+X</i><i style="top:171px;height:15px;color:#20702b">M:C</i><i style="top:186px;height:15px;color:#247a30">C*2</i><i style="top:201px;height:15px;color:#267f33">:+T</i><i style="top:216px;height:20px;color:#267e32">V$K%</i><i style="top:236px;height:25px;color:#23772f">RC**T</i><i style="top:266px;height:15px;color:#247930">V6$</i><i style="top:281px;height:15px;color:#1c6426">8YC</i><i style="top:296px;height:15px;color:#1c6426">VDF</i><i style="top:311px;height:15px;color:#23772f">2&$</i></p><p style="left:131px"><i style="top:-1px;height:20px;color:#30953e">2@+1</i><i style="top:19px;height:10px;color:#339d43">TP</i><i style="top:29px;height:10px;color:#35a145">A#</i><i style="top:39px;height:10px;color:#39a84a">3#</i><i style="top:49px;height:25px;color:#349f44">R72C2</i><i style="top:74px;height:10px;color:#298636">Z7</i><i style="top:84px;height:15px;color:#39a94a">C$H</i><i style="top:99px;height:10px;color:#319840">%Y</i><i style="top:109px;height:10px;color:#3bad4d">D4</i><i style="top:119px;height:20px;color:#37a548">3UV5</i><i style="top:139px;height:10px;color:#37a548">YH</i><i style="top:149px;height:25px;color:#39a94a">@$+48</i><i style="top:174px;height:5px;color:#42ba55">P</i><i style="top:179px;height:5px;color:#2a8837">1</i><i style="top:184px;height:25px;color:#329941">1M6H@</i><i style="top:209px;height:15px;color:#3eb350">PZH</i><i style="top:224px;height:25px;color:#339d43">8&LL%</i><i style="top:249px;height:20px;color:#3fb552">8@+6</i><i style="top:269px;height:15px;color:#2e923d">HKV</i><i style="top:284px;height:5px;color:#40b552">B</i><i style="top:309px;height:10px;color:#288435">U5</i><i style="top:319px;height:15px;color:#3eb250">23R</i></p><p style="left:137px"><i style="top:-3px;height:20px;color:#339d43">T$E6</i><i style="top:17px;height:25px;color:#3bac4c">4PT23</i><i style="top:42px;height:15px;color:#4dcd62">T85</i><i style="top:57px;height:10px;color:#339c42">MZ</i><i style="top:67px;height:10px;color:#2f943e">=H</i><i style="top:77px;height:5px;color:#40b552">$</i><i style="top:82px;height:25px;color:#4ccb60">%A94A</i><i style="top:107px;height:15px;color:#47c35b">D*F</i><i style="top:122px;height:10px;color:#3bad4d">9%</i><i style="top:132px;height:20px;color:#46bf59">PCA#</i><i style="top:152px;height:5px;color:#4dc560">C</i><i style="top:157px;height:25px;color:#329541">MB%E@</i><i style="top:182px;height:5px;color:#2f933d">7</i><i style="top:197px;height:5px;color:#40b552">P</i><i style="top:202px;height:25px;color:#2f943e">X&3#L</i><i style="top:227px;height:25px;color:#329b42">:BEKD</i><i style="top:252px;height:20px;color:#42ba55">+NK@</i><i style="top:272px;height:25px;color:#45bf58">+ECT7</i><i style="top:297px;height:10px;color:#36a246">30</i><i style="top:307px;height:25px;color:#3db04f">9TBHN</i></p><p style="left:144px"><i style="top:-4px;height:25px;color:#37a447">7XB2L</i><i style="top:106px;height:10px;color:#2f883c">E%</i><i style="top:141px;height:5px;color:#4da758">X</i><i style="top:156px;height:10px;color:#3d8f47">8R</i><i style="top:166px;height:5px;color:#49a355">L</i><i style="top:251px;height:10px;color:#3aab4b">P5</i><i style="top:296px;height:5px;color:#339c43">@</i></p><p style="left:151px"><i style="top:-1px;height:20px;color:#40b552">&PEF</i><i style="top:19px;height:20px;color:#41b753">M03$</i><i style="top:39px;height:5px;color:#3db04e">6</i><i style="top:44px;height:25px;color:#40b652">5=U44</i><i style="top:69px;height:5px;color:#42ba55">L</i><i style="top:74px;height:5px;color:#41b753">6</i><i style="top:79px;height:20px;color:#41b853">@ECD</i><i style="top:99px;height:5px;color:#45a652">V</i><i style="top:104px;height:25px;color:#53b761">:5M:K</i><i style="top:129px;height:10px;color:#5db367">P0</i><i style="top:139px;height:25px;color:#63b76d">M$N@R</i><i style="top:164px;height:15px;color:#6dc478">:DX</i><i style="top:179px;height:15px;color:#53a95d">1V7</i><i style="top:194px;height:5px;color:#46a152">0</i><i style="top:219px;height:5px;color:#3db14f">B</i><i style="top:224px;height:20px;color:#3caf4e">35&K</i><i style="top:244px;height:5px;color:#3bac4c">U</i><i style="top:249px;height:25px;color:#3aab4b">$V5&%</i><i style="top:274px;height:15px;color:#36a347">6=2</i><i style="top:289px;height:20px;color:#2d8f3b">=BH$</i></p><p style="left:156px"><i style="top:-4px;height:15px;color:#185921">C6+</i><i style="top:11px;height:5px;color:#1d6727">4</i><i style="top:16px;height:5px;color:#1e6b29">D</i><i style="top:21px;height:5px;color:#175620">Y</i><i style="top:26px;height:10px;color:#1f6c29">:L</i><i style="top:36px;height:25px;color:#1a6024">=XV6@</i><i style="top:61px;height:5px;color:#1e6a28">E</i><i style="top:66px;height:5px;color:#1e6a28">7</i><i style="top:71px;height:25px;color:#16531e">%U2ER</i><i style="top:96px;height:15px;color:#1b5622">+*@</i><i style="top:111px;height:20px;color:#2b6e32">ZH=:</i><i style="top:131px;height:5px;color:#3d8445">5</i><i style="top:136px;height:15px;color:#408748">BRM</i><i style="top:151px;height:5px;color:#448a4b">H</i><i style="top:156px;height:5px;color:#438a4b">8</i><i style="top:161px;height:10px;color:#418849">N=</i><i style="top:171px;height:20px;color:#3b8243">A:PY</i><i style="top:191px;height:15px;color:#286a30">H1%</i><i style="top:206px;height:5px;color:#206228">9</i><i style="top:211px;height:15px;color:#1e6227">CP:</i><i style="top:226px;height:10px;color:#1c6526">TF</i><i style="top:236px;height:15px;color:#16541f">X59</i><i style="top:266px;height:15px;color:#1c6426">MC%</i><i style="top:281px;height:25px;color:#1e6b29">75X9Z</i><i style="top:306px;height:20px;color:#195d23">F:=$</i></p><p style="left:161px"><i style="top:-5px;height:5px;color:#329a41">U</i><i style="top:0px;height:25px;color:#2b8a38">%KR7H</i><i style="top:25px;height:5px;color:#2d903c">Z</i><i style="top:30px;height:10px;color:#2e913c">V9</i><i style="top:40px;height:5px;color:#278134">4</i><i style="top:45px;height:15px;color:#2d8f3b">$@C</i><i style="top:60px;height:10px;color:#2d903c">$Y</i><i style="top:70px;height:5px;color:#247930">K</i><i style="top:75px;height:5px;color:#2d903c">9</i><i style="top:80px;height:25px;color:#30963f">TH%2Y</i><i style="top:105px;height:10px;color:#368540">$2</i><i style="top:115px;height:15px;color:#37803f">A=2</i><i style="top:130px;height:15px;color:#4c9955">4:D</i><i style="top:145px;height:15px;color:#438a4a">UP+</i><i style="top:160px;height:20px;color:#5dac66">$@@Z</i><i style="top:180px;height:25px;color:#55a95f">9K#B%</i><i style="top:210px;height:15px;color:#3a9a47">UK9</i><i style="top:225px;height:15px;color:#298636">F6U</i><i style="top:270px;height:10px;color:#288435">ZC</i><i style="top:280px;height:10px;color:#36a347">Y1</i><i style="top:290px;height:25px;color:#298636">7#PE#</i><i style="top:315px;height:15px;color:#319840">7FP</i></p><p style="left:168px"><i style="top:-4px;height:10px;color:#278134">*6</i><i style="top:6px;height:20px;color:#267f33">V%@U</i><i style="top:26px;height:25px;color:#1f6e2a">E:@AY</i><i style="top:51px;height:15px;color:#278234">@1$</i><i style="top:66px;height:10px;color:#1c6627">%N</i><i style="top:76px;height:20px;color:#278134">$4T%</i><i style="top:96px;height:5px;color:#2d8439">A</i><i style="top:101px;height:15px;color:#297633">9TC</i><i style="top:116px;height:5px;color:#276b2f">D</i><i style="top:121px;height:25px;color:#337e3c">AR%N1</i><i style="top:146px;height:15px;color:#3e8a47">1XU</i><i style="top:166px;height:5px;color:#2f7336">T</i><i style="top:171px;height:10px;color:#378240">XV</i><i style="top:181px;height:5px;color:#34803d">C</i><i style="top:186px;height:20px;color:#317d3a">#1D8</i><i style="top:206px;height:15px;color:#20692a">BF6</i><i style="top:221px;height:10px;color:#23762e">*6</i><i style="top:231px;height:25px;color:#1d6226">3YM16</i><i style="top:256px;height:5px;color:#1d6727">H</i><i style="top:261px;height:5px;color:#1d6727">T</i><i style="top:266px;height:20px;color:#278234">F%9B</i><i style="top:286px;height:10px;color:#1d6928">96</i><i style="top:296px;height:20px;color:#21732d">%5P6</i><i style="top:316px;height:20px;color:#21732d">26H3</i></p><p style="left:174px"><i style="top:-3px;height:20px;color:#43bc56">HPF+</i><i style="top:17px;height:10px;color:#319740">Z@</i><i style="top:27px;height:15px;color:#39a84a">:PL</i><i style="top:42px;height:10px;color:#4fd164">8%</i><i style="top:52px;height:15px;color:#4bca5f">:*9</i><i style="top:67px;height:25px;color:#4ac85e">BA&7N</i><i style="top:92px;height:25px;color:#37a548">@F19+</i><i style="top:117px;height:25px;color:#40a44e">4@1D9</i><i style="top:142px;height:10px;color:#6edd7f">U@</i><i style="top:152px;height:5px;color:#52b560">C</i><i style="top:157px;height:15px;color:#46a352">V#0</i><i style="top:172px;height:5px;color:#3e9a4a">8</i><i style="top:187px;height:15px;color:#5dd770">%+Y</i><i style="top:202px;height:5px;color:#54d869">Z</i><i style="top:207px;height:20px;color:#59d06b">X1+6</i><i style="top:227px;height:25px;color:#6dcf7a">Y8L=@</i><i style="top:267px;height:20px;color:#3caf4e">LB7B</i><i style="top:292px;height:10px;color:#50d366">YZ</i><i style="top:302px;height:25px;color:#52d567">7E:H7</i></p><p style="left:180px"><i style="top:0px;height:10px;color:#3cae4d">78</i><i style="top:10px;height:25px;color:#41b853">=2442</i><i style="top:35px;height:25px;color:#319941">X7XPR</i><i style="top:60px;height:5px;color:#43bc56">4</i><i style="top:65px;height:25px;color:#42ba55">E152Z</i><i style="top:90px;height:10px;color:#38a648">0F</i><i style="top:100px;height:5px;color:#37a447">1</i><i style="top:105px;height:15px;color:#3bad4d">C+5</i><i style="top:120px;height:25px;color:#44bd57">6@MUC</i><i style="top:145px;height:5px;color:#3bac4c">K</i><i style="top:150px;height:5px;color:#339d43">8</i><i style="top:155px;height:10px;color:#47c35b">:K</i><i style="top:165px;height:25px;color:#2e913c">CVR*6</i><i style="top:190px;height:25px;color:#39a84a">ENX#2</i><i style="top:215px;height:15px;color:#5db067">@P1</i><i style="top:230px;height:20px;color:#82d18b">1AU7</i><i style="top:250px;height:10px;color:#76cf81">D4</i><i style="top:260px;height:20px;color:#41984c">16L*</i><i style="top:280px;height:5px;color:#319840">:</i><i style="top:285px;height:25px;color:#3bad4d">0EY&%</i><i style="top:310px;height:25px;color:#49c65d">ZXN*2</i></p><p style="left:185px"><i style="top:0px;height:10px;color:#3aab4b">0N</i><i style="top:10px;height:5px;color:#42b954">2</i><i style="top:15px;height:5px;color:#35a145">#</i><i style="top:20px;height:5px;color:#3caf4e">K</i><i style="top:25px;height:20px;color:#3cae4d">YZ1Z</i><i style="top:45px;height:25px;color:#4bc95f">87KZ*</i><i style="top:70px;height:10px;color:#45bf58">R5</i><i style="top:80px;height:15px;color:#45bf58">F5&</i><i style="top:95px;height:5px;color:#2f943e">@</i><i style="top:100px;height:10px;color:#3db04f">5X</i><i style="top:110px;height:20px;color:#2f933d">47B=</i><i style="top:130px;height:15px;color:#4bca5f">3K3</i><i style="top:145px;height:10px;color:#36a347">AN</i><i style="top:155px;height:25px;color:#41b854">$=%%K</i><i style="top:180px;height:25px;color:#2d8f3b">X=UZP</i><i style="top:205px;height:25px;color:#78d383">9HZ0N</i><i style="top:230px;height:10px;color:#78bc7d">H4</i><i style="top:240px;height:25px;color:#95da9b">=C:R+</i><i style="top:265px;height:15px;color:#5cbe69">0H0</i><i style="top:280px;height:25px;color:#3aaa4b">AFRD@</i><i style="top:305px;height:15px;color:#35a145">45K</i></p><p style="left:190px"><i style="top:-5px;height:20px;color:#1a5e23">8AN#</i><i style="top:15px;height:10px;color:#21732d">V:</i><i style="top:25px;height:10px;color:#1d6727">NM</i><i style="top:35px;height:20px;color:#1f6d2a">*Z=P</i><i style="top:55px;height:25px;color:#195b22">NNHPN</i><i style="top:80px;height:25px;color:#1e6a28">4@M+Z</i><i style="top:105px;height:5px;color:#1e6a28">@</i><i style="top:110px;height:15px;color:#195c22">NN9</i><i style="top:125px;height:5px;color:#185921">U</i><i style="top:130px;height:15px;color:#20702b">NYA</i><i style="top:145px;height:5px;color:#1b6124">1</i><i style="top:150px;height:5px;color:#1b6325">Z</i><i style="top:155px;height:15px;color:#21732d">BFT</i><i style="top:170px;height:15px;color:#1f6d2a">C9%</i><i style="top:185px;height:10px;color:#1f6e2a">:Y</i><i style="top:195px;height:25px;color:#216029">&N*R#</i><i style="top:220px;height:5px;color:#74b479">:</i><i style="top:225px;height:25px;color:#7dbb81">RDZ#7</i><i style="top:250px;height:25px;color:#64a86a">55#=8</i><i style="top:275px;height:25px;color:#236d2d">DYP9A</i><i style="top:300px;height:25px;color:#185a21">NFC&Y</i></p><p style="left:195px"><i style="top:-1px;height:5px;color:#2d8f3b">0</i><i style="top:4px;height:5px;color:#268033">Z</i><i style="top:9px;height:15px;color:#35a145">EPP</i><i style="top:24px;height:15px;color:#36a347">$%*</i><i style="top:39px;height:20px;color:#36a347">4CY7</i><i style="top:59px;height:5px;color:#268033">4</i><i style="top:64px;height:20px;color:#2c8d3a">%UY*</i><i style="top:84px;height:10px;color:#30953f">D&</i><i style="top:94px;height:25px;color:#23772f">ZHE:0</i><i style="top:119px;height:20px;color:#268033">TA5+</i><i style="top:139px;height:20px;color:#22762e">&F88</i><i style="top:159px;height:10px;color:#278234">*&</i><i style="top:174px;height:15px;color:#298636">@F*</i><i style="top:189px;height:25px;color:#30853c">=1C7M</i><i style="top:214px;height:15px;color:#71b276">3AK</i><i style="top:229px;height:15px;color:#8fc892">XLZ</i><i style="top:244px;height:20px;color:#81be86">@6RK</i><i style="top:264px;height:10px;color:#4a9652">7$</i><i style="top:299px;height:10px;color:#23772f">F+</i><i style="top:309px;height:15px;color:#36a246">BC6</i><i style="top:324px;height:20px;color:#2b8b39">FUA$</i></p><p style="left:202px"><i style="top:0px;height:15px;color:#21732d">XB=</i><i style="top:15px;height:15px;color:#20702b">Z*U</i><i style="top:30px;height:10px;color:#1c6526">%Y</i><i style="top:40px;height:5px;color:#1e6a28">0</i><i style="top:45px;height:5px;color:#247930">X</i><i style="top:50px;height:5px;color:#1c6426">A</i><i style="top:55px;height:10px;color:#1b6325">:X</i><i style="top:65px;height:5px;color:#21732d">0</i><i style="top:70px;height:10px;color:#22752e">*B</i><i style="top:80px;height:20px;color:#21732d">5+ZV</i><i style="top:100px;height:5px;color:#247930">M</i><i style="top:105px;height:25px;color:#1f6d2a">#FKNF</i><i style="top:150px;height:25px;color:#23782f">X0#MM</i><i style="top:190px;height:10px;color:#1f5f27">TN</i><i style="top:200px;height:20px;color:#3c8344">#C0+</i><i style="top:220px;height:25px;color:#83bf87">2R=6Z</i><i style="top:245px;height:25px;color:#81be85">X9%MH</i><i style="top:270px;height:25px;color:#25662d">085U7</i><i style="top:295px;height:20px;color:#1c6126">#V&&</i><i style="top:315px;height:15px;color:#1d6828">#3M</i></p><p style="left:207px"><i style="top:-5px;height:15px;color:#1b6124">06%</i><i style="top:10px;height:15px;color:#21722c">=:M</i><i style="top:25px;height:20px;color:#1f6e2a">NZ02</i><i style="top:45px;height:10px;color:#195d23">2A</i><i style="top:55px;height:10px;color:#185a21">13</i><i style="top:65px;height:5px;color:#185a21">1</i><i style="top:70px;height:15px;color:#1f6e2a">CV8</i><i style="top:85px;height:10px;color:#195b22">Y:</i><i style="top:95px;height:5px;color:#21722c">X</i><i style="top:100px;height:15px;color:#1c6526">7B&</i><i style="top:115px;height:20px;color:#175720">K:PN</i><i style="top:135px;height:15px;color:#21722c">%K+</i><i style="top:150px;height:15px;color:#1b6325">1F5</i><i style="top:165px;height:25px;color:#1d6828">U32&1</i><i style="top:190px;height:15px;color:#277230">DA5</i><i style="top:205px;height:25px;color:#488f4f">C135P</i><i style="top:230px;height:10px;color:#85c188">M5</i><i style="top:240px;height:10px;color:#7fbd83">N$</i><i style="top:250px;height:15px;color:#67aa6d">$:5</i><i style="top:265px;height:10px;color:#317539">F8</i><i style="top:275px;height:5px;color:#1a5923">3</i><i style="top:295px;height:15px;color:#246c2e">TV2</i><i style="top:310px;height:5px;color:#21722c">E</i><i style="top:315px;height:25px;color:#20702b">28+25</i></p><p style="left:212px"><i style="top:25px;height:10px;color:#35a045">DD</i><i style="top:95px;height:20px;color:#30963f">U3ZB</i><i style="top:155px;height:10px;color:#3aab4b">L1</i><i style="top:185px;height:15px;color:#3cae4d">AUK</i><i style="top:200px;height:15px;color:#6ecf7b">+4Y</i><i style="top:215px;height:5px;color:#80ca87">H</i><i style="top:220px;height:5px;color:#64a96b">&</i><i style="top:225px;height:25px;color:#82c688">&=D:=</i><i style="top:250px;height:5px;color:#7ac582">E</i><i style="top:255px;height:10px;color:#5ba863">*N</i><i style="top:265px;height:10px;color:#43974d">80</i></p><p style="left:219px"><i style="top:-4px;height:20px;color:#1f6e2a">4V6Z</i><i style="top:16px;height:25px;color:#288435">ZDCN+</i><i style="top:41px;height:10px;color:#23772f">1*</i><i style="top:51px;height:10px;color:#2b8a38">*9</i><i style="top:61px;height:25px;color:#247a30">H%RKY</i><i style="top:86px;height:15px;color:#2f933d">0$&</i><i style="top:101px;height:15px;color:#1f6e2a">D0R</i><i style="top:116px;height:25px;color:#278134">RN=@0</i><i style="top:141px;height:20px;color:#2c8e3b">8TY@</i><i style="top:161px;height:20px;color:#2c8c3a">LEV3</i><i style="top:181px;height:5px;color:#278234">H</i><i style="top:186px;height:25px;color:#21722c">M%V%$</i><i style="top:211px;height:5px;color:#357e3d">*</i><i style="top:216px;height:10px;color:#438f4c">KU</i><i style="top:226px;height:20px;color:#448b4c">3U23</i><i style="top:251px;height:20px;color:#388040">N0@C</i><i style="top:271px;height:10px;color:#358f42">:C</i><i style="top:281px;height:25px;color:#307939">ME=+A</i><i style="top:306px;height:15px;color:#307c3a">V31</i><i style="top:321px;height:15px;color:#257d32">7%F</i></p><p style="left:225px"><i style="top:0px;height:5px;color:#349f44">%</i><i style="top:5px;height:15px;color:#2c8d3a">NE:</i><i style="top:20px;height:20px;color:#3aaa4b">XR$A</i><i style="top:40px;height:10px;color:#2b8b39">0E</i><i style="top:50px;height:25px;color:#349f44">Y#A05</i><i style="top:75px;height:15px;color:#38a648">Z33</i><i style="top:90px;height:10px;color:#38a648">YY</i><i style="top:100px;height:20px;color:#319941">9P7R</i><i style="top:120px;height:25px;color:#3fb451">CL6L3</i><i style="top:145px;height:20px;color:#2e913c">T:$V</i><i style="top:165px;height:10px;color:#35a045">:H</i><i style="top:175px;height:20px;color:#3db04e">K*F#</i><i style="top:195px;height:15px;color:#54b260">R*&</i><i style="top:210px;height:5px;color:#46924f">:</i><i style="top:215px;height:20px;color:#509f59">$C5K</i><i style="top:235px;height:10px;color:#4aa355">VM</i><i style="top:245px;height:5px;color:#46a353">N</i><i style="top:260px;height:5px;color:#349e44">2</i><i style="top:265px;height:20px;color:#40ab50">@CRF</i><i style="top:285px;height:20px;color:#3e8846">%*:L</i><i style="top:305px;height:20px;color:#4ea459">M1$4</i></p><p style="left:230px"><i style="top:-5px;height:5px;color:#257c31">U</i><i style="top:0px;height:10px;color:#339c43">$6</i><i style="top:10px;height:10px;color:#319740">0&</i><i style="top:20px;height:20px;color:#349e44">M@=M</i><i style="top:40px;height:10px;color:#30963f">PX</i><i style="top:50px;height:10px;color:#247a30">U5</i><i style="top:60px;height:5px;color:#2d903c">Z</i><i style="top:65px;height:25px;color:#2e913c">RX&+D</i><i style="top:90px;height:15px;color:#2b8b39">3AC</i><i style="top:105px;height:5px;color:#288335">2</i><i style="top:110px;height:20px;color:#339d43">M2EC</i><i style="top:130px;height:15px;color:#35a045">%ML</i><i style="top:145px;height:10px;color:#21732d">BR</i><i style="top:155px;height:10px;color:#288536">F=</i><i style="top:165px;height:10px;color:#2f943e">9E</i><i style="top:175px;height:10px;color:#2e923d">DN</i><i style="top:185px;height:10px;color:#389044">$&</i><i style="top:195px;height:20px;color:#378040">T%K&</i><i style="top:215px;height:20px;color:#488f4f">V7:L</i><i style="top:235px;height:25px;color:#489952">V6KH&</i><i style="top:285px;height:15px;color:#418b49">U7L</i><i style="top:300px;height:25px;color:#408948">VEZ4A</i></p><p style="left:237px"><i style="top:-2px;height:15px;color:#1b6124">TND</i><i style="top:13px;height:10px;color:#1d6928">AV</i><i style="top:23px;height:25px;color:#1d6928">X7B6V</i><i style="top:48px;height:15px;color:#1c6526">31R</i><i style="top:63px;height:5px;color:#1a6024">Y</i><i style="top:68px;height:15px;color:#1c6526">72C</i><i style="top:83px;height:10px;color:#1c6426">PN</i><i style="top:93px;height:20px;color:#21732d">RX$R</i><i style="top:113px;height:5px;color:#1a5f23">6</i><i style="top:118px;height:5px;color:#1c6627">&</i><i style="top:123px;height:15px;color:#1b6124">*NR</i><i style="top:138px;height:15px;color:#22752e">3E%</i><i style="top:153px;height:15px;color:#1b6124">3%V</i><i style="top:168px;height:15px;color:#23772f">CY1</i><i style="top:183px;height:25px;color:#2e7c38">B#RDK</i><i style="top:208px;height:15px;color:#509757">643</i><i style="top:223px;height:20px;color:#4f9556">EV44</i><i style="top:243px;height:15px;color:#24642b">1RB</i><i style="top:258px;height:15px;color:#247a30">8R=</i><i style="top:273px;height:10px;color:#28692f">N%</i><i style="top:283px;height:5px;color:#3d8444">H</i><i style="top:288px;height:20px;color:#42894a">CT%=</i><i style="top:308px;height:25px;color:#2f7337">D9=:F</i></p><p style="left:243px"><i style="top:-3px;height:15px;color:#1d6727">P3E</i><i style="top:12px;height:15px;color:#185820">D+M</i><i style="top:27px;height:10px;color:#195b22">X%</i><i style="top:37px;height:25px;color:#1b6325">26N6K</i><i style="top:62px;height:25px;color:#206f2b">E*8K1</i><i style="top:87px;height:25px;color:#1b6325">LF36H</i><i style="top:112px;height:15px;color:#1e6b29">*+F</i><i style="top:127px;height:20px;color:#195c22">6RC8</i><i style="top:147px;height:15px;color:#195d23">%FV</i><i style="top:162px;height:10px;color:#1a5e23">$N</i><i style="top:172px;height:5px;color:#1c6627">+</i><i style="top:177px;height:20px;color:#1c6126">P:=F</i><i style="top:197px;height:10px;color:#3d8445">F#</i><i style="top:207px;height:5px;color:#4f9556">:</i><i style="top:212px;height:15px;color:#539a5a">YUV</i><i style="top:227px;height:10px;color:#499050">LK</i><i style="top:237px;height:5px;color:#33793b">8</i><i style="top:242px;height:15px;color:#27692f">EP8</i><i style="top:257px;height:15px;color:#1d6928">A=:</i><i style="top:272px;height:5px;color:#25662d">%</i><i style="top:277px;height:10px;color:#317539">DC</i><i style="top:287px;height:25px;color:#428849">A1%V7</i><i style="top:312px;height:25px;color:#25662d">1=UM0</i></p><p style="left:250px"><i style="top:-4px;height:5px;color:#30953e">0</i><i style="top:1px;height:20px;color:#2c8d3a">*F2C</i><i style="top:21px;height:10px;color:#298737">+%</i><i style="top:31px;height:25px;color:#278234">XZRR%</i><i style="top:56px;height:5px;color:#2e923d">R</i><i style="top:61px;height:15px;color:#257c31">TA+</i><i style="top:76px;height:25px;color:#288435">M+KRT</i><i style="top:101px;height:5px;color:#288435">0</i><i style="top:106px;height:10px;color:#21732d">T1</i><i style="top:116px;height:15px;color:#1f6e2a">8%2</i><i style="top:131px;height:5px;color:#2b8b39">P</i><i style="top:136px;height:5px;color:#298536">6</i><i style="top:141px;height:20px;color:#2d903c">:+&B</i><i style="top:161px;height:15px;color:#1f6e2a">A7E</i><i style="top:176px;height:25px;color:#21732d">2$:@@</i><i style="top:201px;height:10px;color:#45904d">*6</i><i style="top:211px;height:10px;color:#478e4e">9*</i><i style="top:221px;height:20px;color:#4a9351">76EC</i><i style="top:241px;height:10px;color:#3b8d45">V5</i><i style="top:271px;height:25px;color:#2b7334">H*V5:</i><i style="top:296px;height:25px;color:#3d8445">=HTZU</i></p><p style="left:257px"><i style="top:-5px;height:10px;color:#41b854">HV</i><i style="top:5px;height:20px;color:#4dcd61">DZRR</i><i style="top:25px;height:25px;color:#3fb552">MMA=+</i><i style="top:50px;height:25px;color:#48c45b">7%76E</i><i style="top:75px;height:5px;color:#49c65d">8</i><i style="top:80px;height:10px;color:#35a045">+L</i><i style="top:90px;height:10px;color:#49c75d">FP</i><i style="top:100px;height:20px;color:#39a84a">$&DU</i><i style="top:120px;height:10px;color:#48c45b">L2</i><i style="top:130px;height:25px;color:#47c25a">BA$X$</i><i style="top:155px;height:25px;color:#37a548">T2DN$</i><i style="top:180px;height:15px;color:#2f933d">:73</i><i style="top:195px;height:15px;color:#51b15e">X3C</i><i style="top:210px;height:5px;color:#499852">B</i><i style="top:215px;height:5px;color:#70cb7b">+</i><i style="top:220px;height:20px;color:#63bc6f">Z@D$</i><i style="top:240px;height:5px;color:#51b55f">M</i><i style="top:245px;height:20px;color:#5bc96b">@&5T</i><i style="top:265px;height:5px;color:#48bb59">$</i><i style="top:270px;height:15px;color:#4fb75e">&C=</i><i style="top:285px;height:15px;color:#69c374">=7L</i><i style="top:300px;height:5px;color:#4ea058">P</i><i style="top:305px;height:5px;color:#69c976">K</i><i style="top:310px;height:15px;color:#46a051">L2Z</i></p><p style="left:262px"><i style="top:-5px;height:20px;color:#2f943e">PDM*</i><i style="top:15px;height:25px;color:#36a246">&3CYX</i><i style="top:40px;height:10px;color:#4bc95f">F$</i><i style="top:50px;height:20px;color:#2d903c">DHUC</i><i style="top:70px;height:10px;color:#339d43">CE</i><i style="top:80px;height:20px;color:#2f933d">Y%:9</i><i style="top:100px;height:20px;color:#43bb55">X7F$</i><i style="top:120px;height:25px;color:#339d43">U6666</i><i style="top:145px;height:15px;color:#2b8c39">CZ*</i><i style="top:160px;height:15px;color:#2e913c">1FB</i><i style="top:175px;height:25px;color:#3fb451">:Y62T</i><i style="top:200px;height:10px;color:#4db35c">67</i><i style="top:210px;height:5px;color:#50ae5c">K</i><i style="top:215px;height:5px;color:#54ae60">B</i><i style="top:235px;height:15px;color:#51a05a">4$R</i><i style="top:250px;height:25px;color:#4ca256">2B2U5</i><i style="top:300px;height:10px;color:#489d53">NH</i><i style="top:310px;height:15px;color:#3d9849">Z=%</i></p><p style="left:268px"><i style="top:-3px;height:25px;color:#1b6325">8YC@B</i><i style="top:22px;height:10px;color:#17551f">L$</i><i style="top:32px;height:15px;color:#1d6827">EK5</i><i style="top:47px;height:20px;color:#17551f">#%99</i><i style="top:67px;height:20px;color:#1a5e23">=N07</i><i style="top:87px;height:5px;color:#1b6325">=</i><i style="top:92px;height:5px;color:#185a21">@</i><i style="top:97px;height:25px;color:#1d6928">YT@5R</i><i style="top:122px;height:15px;color:#1d6827">%P8</i><i style="top:137px;height:15px;color:#1b6225">2RN</i><i style="top:152px;height:15px;color:#1b6225">7:F</i><i style="top:167px;height:25px;color:#1e6b29">D:58@</i><i style="top:192px;height:20px;color:#17531f">$5:Z</i><i style="top:212px;height:5px;color:#418848">#</i><i style="top:217px;height:15px;color:#4d9354">1F$</i><i style="top:232px;height:10px;color:#5ea465">UH</i><i style="top:247px;height:20px;color:#4d9354">#:0:</i><i style="top:292px;height:10px;color:#24662c">M7</i><i style="top:317px;height:25px;color:#195b22">V3X:1</i></p><p style="left:274px"><i style="top:0px;height:15px;color:#3caf4e">3&%</i><i style="top:15px;height:20px;color:#3fb451">5FVP</i><i style="top:35px;height:5px;color:#46c059">2</i><i style="top:40px;height:15px;color:#4ac85e">1BT</i><i style="top:55px;height:15px;color:#49c65d">TUR</i><i style="top:70px;height:15px;color:#50d265">02Y</i><i style="top:85px;height:25px;color:#42ba55">:=%F2</i><i style="top:110px;height:15px;color:#4ecf63">BUC</i><i style="top:125px;height:25px;color:#44be57">XMXLC</i><i style="top:150px;height:20px;color:#3db04e">%:72</i><i style="top:170px;height:10px;color:#2e913c">RU</i><i style="top:180px;height:5px;color:#41b854">&</i><i style="top:185px;height:10px;color:#4ac85e">0=</i><i style="top:195px;height:15px;color:#49a555">X0C</i><i style="top:210px;height:15px;color:#89d591">9Z#</i><i style="top:225px;height:15px;color:#93d298">P9A</i><i style="top:240px;height:25px;color:#77b77c">VK71#</i><i style="top:265px;height:20px;color:#56ad60">B6H6</i><i style="top:290px;height:20px;color:#51bf61">@&::</i><i style="top:320px;height:25px;color:#3aaa4b">VCXC9</i></p><p style="left:280px"><i style="top:0px;height:25px;color:#2a8938">=X5F3</i><i style="top:25px;height:5px;color:#22752e">7</i><i style="top:30px;height:5px;color:#267e32">F</i><i style="top:35px;height:15px;color:#1d6727">@$1</i><i style="top:50px;height:10px;color:#20712c">3H</i><i style="top:60px;height:25px;color:#278134">N+X$K</i><i style="top:85px;height:5px;color:#21722c">+</i><i style="top:90px;height:15px;color:#1f6d2a">19%</i><i style="top:105px;height:5px;color:#1d6928">Y</i><i style="top:110px;height:5px;color:#23772f">Z</i><i style="top:115px;height:25px;color:#1f6e2a">+R$Y0</i><i style="top:140px;height:20px;color:#247a30">=F4Z</i><i style="top:160px;height:20px;color:#2b8b39">+M2Z</i><i style="top:190px;height:15px;color:#246b2d">UAL</i><i style="top:205px;height:25px;color:#509757">=92+$</i><i style="top:230px;height:20px;color:#8fc893">3R24</i><i style="top:250px;height:10px;color:#71b276">X@</i><i style="top:260px;height:20px;color:#4b9253">0606</i><i style="top:280px;height:20px;color:#278234">4BVV</i><i style="top:310px;height:10px;color:#1d6827">H1</i><i style="top:320px;height:10px;color:#1f6e2a">#M</i></p><p style="left:287px"><i style="top:-3px;height:25px;color:#44be57">RAMNM</i><i style="top:22px;height:15px;color:#3eb250">@8T</i><i style="top:37px;height:10px;color:#3aab4b">DB</i><i style="top:47px;height:10px;color:#3db14f">MU</i><i style="top:57px;height:10px;color:#3caf4e">8X</i><i style="top:67px;height:20px;color:#319941">N%F6</i><i style="top:87px;height:25px;color:#38a648">MK2X%</i><i style="top:112px;height:5px;color:#40b652">:</i><i style="top:117px;height:15px;color:#329a41">*&&</i><i style="top:132px;height:15px;color:#3cae4d">XM1</i><i style="top:147px;height:10px;color:#349f44">LT</i><i style="top:182px;height:10px;color:#42b954">@%</i><i style="top:192px;height:5px;color:#459f50">+</i><i style="top:197px;height:20px;color:#4ea058">53ER</i><i style="top:217px;height:15px;color:#8cca90">9R4</i><i style="top:232px;height:15px;color:#91c994">&$$</i><i style="top:247px;height:25px;color:#7bba80">D2ZPL</i><i style="top:272px;height:10px;color:#388b43">98</i><i style="top:287px;height:25px;color:#3eb14f">PPPX5</i><i style="top:312px;height:10px;color:#298737">$F</i><i style="top:322px;height:25px;color:#2d903c">PHEU%</i></p><p style="left:294px"><i style="top:-3px;height:15px;color:#43bb55">8@H</i><i style="top:12px;height:10px;color:#41b854">EC</i><i style="top:22px;height:15px;color:#48c55c">R0U</i><i style="top:37px;height:10px;color:#3bad4d">NA</i><i style="top:52px;height:10px;color:#45bf58">&:</i><i style="top:62px;height:10px;color:#3fb451">*V</i><i style="top:72px;height:25px;color:#35a145">CH8@D</i><i style="top:97px;height:25px;color:#4ccb60">9K6A=</i><i style="top:122px;height:15px;color:#47c35b">HB@</i><i style="top:157px;height:5px;color:#40b652">@</i><i style="top:162px;height:5px;color:#319840">@</i><i style="top:167px;height:15px;color:#41b854">6=%</i><i style="top:182px;height:15px;color:#339c43">C#2</i><i style="top:197px;height:15px;color:#479c51">=%2</i><i style="top:212px;height:10px;color:#60a666">32</i><i style="top:222px;height:25px;color:#76b67b">:=YLF</i><i style="top:247px;height:25px;color:#94d89a">#PT0:</i><i style="top:297px;height:10px;color:#329a41">H#</i><i style="top:317px;height:5px;color:#3bac4c">V</i></p><p style="left:299px"><i style="top:0px;height:25px;color:#23772f">0LRZE</i><i style="top:25px;height:25px;color:#1d6727">B@+:2</i><i style="top:50px;height:25px;color:#206f2b">6E49&</i><i style="top:75px;height:5px;color:#1c6526">1</i><i style="top:80px;height:15px;color:#1a5e23">V:+</i><i style="top:115px;height:15px;color:#22752e">DC&</i><i style="top:130px;height:15px;color:#1f6528">N&K</i><i style="top:145px;height:20px;color:#25702f">&H:E</i><i style="top:165px;height:15px;color:#20672a">9ZB</i><i style="top:180px;height:10px;color:#1f6a2a">1T</i><i style="top:190px;height:5px;color:#1d6627">H</i><i style="top:195px;height:10px;color:#21662a">CH</i><i style="top:205px;height:5px;color:#317539">#</i><i style="top:210px;height:10px;color:#408747">LM</i><i style="top:220px;height:15px;color:#589e5f">PRM</i><i style="top:235px;height:15px;color:#63a769">DH3</i><i style="top:250px;height:20px;color:#4b9252">NEN%</i><i style="top:270px;height:20px;color:#25712f">N&L3</i><i style="top:290px;height:10px;color:#23772f">EA</i><i style="top:300px;height:15px;color:#21722c">7Z9</i><i style="top:315px;height:25px;color:#1b6225">1E4FU</i></p><p style="left:304px"><i style="top:0px;height:25px;color:#3aab4b">ZRFX4</i><i style="top:25px;height:25px;color:#35a145">3E0FY</i><i style="top:50px;height:25px;color:#2d8f3b">LH:E8</i><i style="top:75px;height:10px;color:#2f933d">V7</i><i style="top:85px;height:5px;color:#2d8f3b">7</i><i style="top:90px;height:15px;color:#329941">0VF</i><i style="top:105px;height:10px;color:#399c47">:3</i><i style="top:115px;height:20px;color:#55c064">5DR&</i><i style="top:135px;height:10px;color:#63c771">B4</i><i style="top:145px;height:25px;color:#3f9249">5#8ET</i><i style="top:170px;height:10px;color:#47a153">D@</i><i style="top:180px;height:25px;color:#388e43">4VM#3</i><i style="top:205px;height:10px;color:#4ba958">Z1</i><i style="top:215px;height:20px;color:#56aa60">2KYT</i><i style="top:235px;height:25px;color:#4d9755">263MN</i><i style="top:270px;height:20px;color:#339b42">9DZ*</i><i style="top:295px;height:25px;color:#3db04e">4EAML</i></p><p style="left:311px"><i style="top:-1px;height:20px;color:#339c43">74%1</i><i style="top:19px;height:5px;color:#4fd164">#</i><i style="top:24px;height:5px;color:#39a84a">9</i><i style="top:29px;height:5px;color:#4ccc61">=</i><i style="top:34px;height:15px;color:#2f933d">L+A</i><i style="top:49px;height:20px;color:#3fb451">C5@6</i><i style="top:69px;height:15px;color:#41b853">Z&F</i><i style="top:84px;height:10px;color:#3eb250">NT</i><i style="top:94px;height:10px;color:#44ab53">A@</i><i style="top:104px;height:15px;color:#67d276">ERU</i><i style="top:119px;height:10px;color:#62bf6e">7K</i><i style="top:129px;height:5px;color:#62b96d">B</i><i style="top:134px;height:25px;color:#5db167">2+1B@</i><i style="top:159px;height:15px;color:#519f5a">103</i><i style="top:174px;height:15px;color:#5eb669">A@F</i><i style="top:189px;height:10px;color:#52af5e">94</i><i style="top:204px;height:25px;color:#3c9b49">&AHZ:</i><i style="top:229px;height:20px;color:#53b660">#FPZ</i><i style="top:249px;height:20px;color:#399645">TMFX</i><i style="top:289px;height:5px;color:#3db04e">1</i><i style="top:294px;height:10px;color:#4ece62">H=</i><i style="top:309px;height:20px;color:#50d366">U9C@</i></p><p style="left:318px"><i style="top:-5px;height:10px;color:#2a8938">HT</i><i style="top:5px;height:10px;color:#267e32">B+</i><i style="top:15px;height:10px;color:#2b8a39">@6</i><i style="top:25px;height:20px;color:#2b8a39">5L:T</i><i style="top:45px;height:15px;color:#349e44">426</i><i style="top:60px;height:20px;color:#247a30">1U6M</i><i style="top:80px;height:15px;color:#319840">TL6</i><i style="top:95px;height:15px;color:#34893f">8BT</i><i style="top:110px;height:15px;color:#388441">1D@</i><i style="top:125px;height:25px;color:#46914e">MU736</i><i style="top:150px;height:25px;color:#4c9654">KU$5%</i><i style="top:175px;height:5px;color:#53a35c">%</i><i style="top:180px;height:25px;color:#56a960">U4*#X</i><i style="top:205px;height:20px;color:#3c9648">R+71</i><i style="top:225px;height:25px;color:#268033">2*7+U</i><i style="top:250px;height:5px;color:#268033">V</i><i style="top:270px;height:25px;color:#278134">9LVHE</i><i style="top:295px;height:25px;color:#2f943e">F%CPZ</i><i style="top:320px;height:15px;color:#2d8e3b">%X7</i></p><p style="left:323px"><i style="top:-3px;height:20px;color:#4fd164">9T28</i><i style="top:17px;height:10px;color:#43bb55">A+</i><i style="top:27px;height:25px;color:#51d366">R2LVE</i><i style="top:52px;height:25px;color:#4fd164">@24HK</i><i style="top:77px;height:15px;color:#36a246">@A$</i><i style="top:92px;height:25px;color:#5ed470">8ZT=H</i><i style="top:117px;height:10px;color:#4fa45a">E8</i><i style="top:127px;height:20px;color:#56a860">H3H0</i><i style="top:147px;height:15px;color:#61b16a">VMD</i><i style="top:162px;height:5px;color:#71c67b">U</i><i style="top:167px;height:25px;color:#69be73">UPM1+</i><i style="top:192px;height:5px;color:#65c973">+</i><i style="top:197px;height:25px;color:#5dc36c">$2K6K</i><i style="top:222px;height:5px;color:#3fb451">F</i><i style="top:227px;height:25px;color:#4ac85e">R5&BH</i><i style="top:252px;height:20px;color:#52d567">H:=+</i><i style="top:272px;height:20px;color:#50d366">9R#A</i><i style="top:292px;height:20px;color:#46c159">MX26</i></p><p style="left:329px"><i style="top:-4px;height:25px;color:#319941">@#62U</i><i style="top:21px;height:15px;color:#3fb451">UX8</i><i style="top:36px;height:25px;color:#3eb350">@L:RB</i><i style="top:61px;height:15px;color:#3eb350">0%8</i><i style="top:76px;height:15px;color:#349f44">ZAH</i><i style="top:91px;height:10px;color:#45bb57">26</i><i style="top:101px;height:15px;color:#5cd16e">UU%</i><i style="top:136px;height:10px;color:#499c53">P3</i><i style="top:146px;height:10px;color:#52a65c">T*</i><i style="top:156px;height:10px;color:#64be6f">A1</i><i style="top:166px;height:25px;color:#53aa5d">*26BC</i><i style="top:241px;height:15px;color:#44bd57">Y3N</i><i style="top:256px;height:25px;color:#329a41">%#21A</i><i style="top:281px;height:10px;color:#49c75d">T$</i><i style="top:311px;height:15px;color:#35a145">8R4</i></p><p style="left:336px"><i style="top:-3px;height:20px;color:#267f33">4FC6</i><i style="top:17px;height:25px;color:#319840">2&PN=</i><i style="top:42px;height:15px;color:#2b8b39">ALY</i><i style="top:57px;height:25px;color:#2f943e">K79@0</i><i style="top:82px;height:15px;color:#319740">U24</i><i style="top:97px;height:15px;color:#319740">B+X</i><i style="top:112px;height:20px;color:#38a448">RVAN</i><i style="top:132px;height:20px;color:#2f843a">V:9U</i><i style="top:152px;height:20px;color:#32863d">E@$$</i><i style="top:172px;height:25px;color:#297b34">K2V4K</i><i style="top:197px;height:15px;color:#36a347">MZ#</i><i style="top:212px;height:10px;color:#23782f">6*</i><i style="top:222px;height:5px;color:#30963f">2</i><i style="top:227px;height:20px;color:#267e32">#:9@</i><i style="top:247px;height:25px;color:#2f943e">1BV#7</i><i style="top:272px;height:25px;color:#2f933d">5#LR6</i><i style="top:297px;height:15px;color:#298737">8&6</i><i style="top:312px;height:10px;color:#23772f">H3</i><i style="top:322px;height:20px;color:#319840">+MUK</i></p><p style="left:341px"><i style="top:0px;height:10px;color:#23782f">R7</i><i style="top:10px;height:15px;color:#2c8c3a">4$E</i><i style="top:25px;height:15px;color:#298536">@PL</i><i style="top:40px;height:10px;color:#2e923d">*@</i><i style="top:50px;height:5px;color:#30963f">2</i><i style="top:55px;height:20px;color:#23772f">1+NB</i><i style="top:75px;height:10px;color:#2b8a38">3$</i><i style="top:85px;height:15px;color:#257c31">MC3</i><i style="top:100px;height:20px;color:#339c42">+YDH</i><i style="top:120px;height:10px;color:#278234">&C</i><i style="top:130px;height:25px;color:#21732d">934X8</i><i style="top:155px;height:20px;color:#288435">CN==</i><i style="top:175px;height:5px;color:#2d8e3b">+</i><i style="top:180px;height:15px;color:#2a8938">#N*</i><i style="top:195px;height:10px;color:#2d903c">*A</i><i style="top:205px;height:5px;color:#2e923d">P</i><i style="top:210px;height:10px;color:#2e923d">4A</i><i style="top:220px;height:15px;color:#247b31">Y%M</i><i style="top:275px;height:25px;color:#319840">9EPBR</i><i style="top:300px;height:25px;color:#298536">#C*X1</i></p><p style="left:346px"><i style="top:-2px;height:25px;color:#1e6a28">=HZZT</i><i style="top:23px;height:10px;color:#1e6b29">45</i><i style="top:33px;height:20px;color:#298636">FN@B</i><i style="top:53px;height:15px;color:#20712c">:$*</i><i style="top:68px;height:15px;color:#268033">N0E</i><i style="top:83px;height:10px;color:#206f2b">H4</i><i style="top:93px;height:20px;color:#2a8837">8B$4</i><i style="top:113px;height:20px;color:#247a30">4E8M</i><i style="top:133px;height:20px;color:#298737">T6ZT</i><i style="top:153px;height:10px;color:#2c8d3a">41</i><i style="top:163px;height:25px;color:#257d32">9+Z@=</i><i style="top:188px;height:25px;color:#23782f">YRR@7</i><i style="top:213px;height:25px;color:#1d6928">1#&&T</i><i style="top:238px;height:5px;color:#22752e">L</i><i style="top:293px;height:20px;color:#21722c">T01X</i><i style="top:318px;height:25px;color:#298636">#7$83</i></p><p style="left:352px"><i style="top:-1px;height:20px;color:#278234">$#$3</i><i style="top:19px;height:15px;color:#1c6627">V#L</i><i style="top:34px;height:10px;color:#1f6e2a">6+</i><i style="top:44px;height:25px;color:#2b8b39">611:$</i><i style="top:69px;height:5px;color:#23782f">V</i><i style="top:74px;height:10px;color:#1c6627">7P</i><i style="top:84px;height:10px;color:#298636">9F</i><i style="top:94px;height:25px;color:#2a8837">528U%</i><i style="top:119px;height:10px;color:#23782f">PD</i><i style="top:129px;height:20px;color:#1e6b29">0VA*</i><i style="top:149px;height:25px;color:#2b8a39">ML9D$</i><i style="top:174px;height:20px;color:#278234">@29X</i><i style="top:194px;height:20px;color:#247a30">P5MF</i><i style="top:214px;height:15px;color:#2b8b39">*5K</i><i style="top:294px;height:10px;color:#23772f">TK</i><i style="top:304px;height:25px;color:#22762e">1%=9R</i></p><p style="left:357px"><i style="top:0px;height:10px;color:#4ccb60">YF</i><i style="top:10px;height:15px;color:#37a447">%L6</i><i style="top:25px;height:20px;color:#35a145">=MTU</i><i style="top:60px;height:20px;color:#4ccc61">3R0+</i><i style="top:80px;height:15px;color:#36a246">H85</i><i style="top:95px;height:20px;color:#4ccb60">D&KZ</i><i style="top:115px;height:20px;color:#43bc56">#*E@</i><i style="top:135px;height:20px;color:#37a447">T90C</i><i style="top:155px;height:25px;color:#36a347">@HBVK</i><i style="top:180px;height:10px;color:#44bd57">FA</i><i style="top:190px;height:15px;color:#39a94a">3+9</i><i style="top:205px;height:25px;color:#2e913c">3DCF*</i><i style="top:230px;height:10px;color:#41b753">HB</i><i style="top:240px;height:15px;color:#48c55c">NH5</i><i style="top:255px;height:25px;color:#4bc95f">99=%&</i><i style="top:310px;height:25px;color:#4ccc61">74A91</i></p><p style="left:363px"><i style="top:0px;height:20px;color:#43bb56">:F%B</i><i style="top:20px;height:20px;color:#4ac85e">6:5D</i><i style="top:40px;height:10px;color:#2f943e">X%</i><i style="top:50px;height:25px;color:#2c8c3a">C%$V6</i><i style="top:75px;height:15px;color:#339c42">96C</i><i style="top:95px;height:10px;color:#3cae4d">%H</i><i style="top:105px;height:20px;color:#43bc56">Z=&L</i><i style="top:125px;height:5px;color:#3eb250">4</i><i style="top:130px;height:10px;color:#41b753">@D</i><i style="top:140px;height:10px;color:#339d43">0%</i><i style="top:150px;height:15px;color:#349f44">ZLM</i><i style="top:165px;height:10px;color:#349f44">53</i><i style="top:180px;height:10px;color:#339c43">:9</i><i style="top:190px;height:25px;color:#349f44">6DR3*</i><i style="top:215px;height:15px;color:#3cae4d">49R</i><i style="top:230px;height:15px;color:#49c75d">4*V</i><i style="top:245px;height:15px;color:#3caf4e">Y2M</i><i style="top:260px;height:15px;color:#43bb56">ZE+</i><i style="top:275px;height:10px;color:#3fb451">AR</i><i style="top:285px;height:10px;color:#2d903c">KF</i><i style="top:295px;height:15px;color:#339d43">FK0</i><i style="top:310px;height:25px;color:#46c159">Y3$:$</i></p><p style="left:370px"><i style="top:-4px;height:25px;color:#35a045">Y6EK0</i><i style="top:21px;height:10px;color:#37a548">62</i><i style="top:31px;height:5px;color:#45bf58">2</i><i style="top:36px;height:25px;color:#349f44">:3@%8</i><i style="top:61px;height:25px;color:#4ac85e">BP9%7</i><i style="top:86px;height:5px;color:#4ccb60">M</i><i style="top:91px;height:5px;color:#3cae4d">+</i><i style="top:96px;height:10px;color:#30963f">E#</i><i style="top:106px;height:10px;color:#3db04f">5M</i><i style="top:116px;height:15px;color:#2e923d">M3F</i><i style="top:131px;height:5px;color:#46c159">Y</i><i style="top:136px;height:10px;color:#4ac85e">::</i><i style="top:146px;height:25px;color:#45bf58">&LR#0</i><i style="top:171px;height:20px;color:#4ccc61">F3AK</i><i style="top:201px;height:10px;color:#2d903c">K:</i><i style="top:216px;height:15px;color:#309740">%@=</i><i style="top:231px;height:20px;color:#3bad4d">E61T</i><i style="top:251px;height:15px;color:#36a246">FT:</i><i style="top:266px;height:20px;color:#4dcd61">7#3:</i><i style="top:286px;height:15px;color:#349e44">=84</i><i style="top:321px;height:15px;color:#339c43">T5C</i></p><p style="left:375px"><i style="top:-3px;height:10px;color:#42ba55">$=</i><i style="top:7px;height:15px;color:#3cae4d">DRP</i><i style="top:22px;height:15px;color:#3db14f">VY9</i><i style="top:37px;height:15px;color:#47c35b">C%9</i><i style="top:52px;height:10px;color:#49c65d">A=</i><i style="top:62px;height:5px;color:#39a94a">H</i><i style="top:67px;height:15px;color:#3bac4c">5:H</i><i style="top:82px;height:25px;color:#349e44">N@3$*</i><i style="top:107px;height:5px;color:#3aab4b">*</i><i style="top:112px;height:5px;color:#3db04e">X</i><i style="top:117px;height:20px;color:#2e923d">3&1#</i><i style="top:137px;height:25px;color:#45c059">3X1K3</i><i style="top:162px;height:10px;color:#4dcd62">=:</i><i style="top:172px;height:5px;color:#2e923d">R</i><i style="top:177px;height:15px;color:#41b753">9&#</i><i style="top:192px;height:10px;color:#45bf58">A%</i><i style="top:212px;height:25px;color:#43bb55">@M=LZ</i><i style="top:237px;height:5px;color:#4dcd62">$</i><i style="top:242px;height:10px;color:#2e913c">MV</i><i style="top:282px;height:5px;color:#40b552">*</i><i style="top:287px;height:15px;color:#4ece62">H2K</i><i style="top:302px;height:20px;color:#329a41">FM#H</i><i style="top:322px;height:15px;color:#47c25a">&7C</i></p><p style="left:382px"><i style="top:-1px;height:25px;color:#47c35b">B4NTH</i><i style="top:24px;height:15px;color:#46c059">H8#</i><i style="top:59px;height:10px;color:#42ba55">$&</i><i style="top:69px;height:20px;color:#39a84a">%N0R</i><i style="top:109px;height:25px;color:#41b854">E$@P%</i><i style="top:134px;height:5px;color:#4ece62">V</i><i style="top:139px;height:20px;color:#37a447">F4U2</i><i style="top:159px;height:20px;color:#44bd57">%X7D</i><i style="top:179px;height:5px;color:#40b652">L</i><i style="top:194px;height:25px;color:#329a41">8Y%4A</i><i style="top:219px;height:25px;color:#36a246">KKLY9</i><i style="top:274px;height:15px;color:#3aab4b">UC7</i><i style="top:289px;height:10px;color:#3bad4d">:N</i></p><p style="left:388px"><i style="top:-5px;height:10px;color:#3bac4c">K4</i><i style="top:5px;height:10px;color:#43bc56">FP</i><i style="top:15px;height:10px;color:#3bad4d">37</i><i style="top:25px;height:25px;color:#49c75d">512Z&</i><i style="top:50px;height:20px;color:#36a347">A40L</i><i style="top:70px;height:25px;color:#3eb250">3KF3X</i><i style="top:115px;height:15px;color:#46c059">196</i><i style="top:130px;height:5px;color:#40b552">H</i><i style="top:135px;height:10px;color:#329a41">&@</i><i style="top:145px;height:20px;color:#2f933d">8K62</i><i style="top:165px;height:10px;color:#4bca5f">=Y</i><i style="top:175px;height:10px;color:#35a045">&3</i><i style="top:185px;height:10px;color:#38a749">HP</i><i style="top:195px;height:20px;color:#319740">T#L&</i><i style="top:215px;height:10px;color:#43bc56">=P</i><i style="top:225px;height:15px;color:#2d8f3b">8ZM</i><i style="top:250px;height:10px;color:#36a347">%R</i><i style="top:260px;height:25px;color:#37a447">54T#$</i><i style="top:285px;height:25px;color:#46c159">%K&A+</i></p><p style="left:393px"><i style="top:-5px;height:20px;color:#39a94a">*2M&</i><i style="top:15px;height:15px;color:#298737">LB3</i><i style="top:30px;height:25px;color:#3bad4d">52DTN</i><i style="top:55px;height:25px;color:#35a045">C:D%N</i><i style="top:80px;height:10px;color:#339d43">CX</i><i style="top:90px;height:15px;color:#3aab4b">X9H</i><i style="top:105px;height:15px;color:#278234">V9B</i><i style="top:120px;height:15px;color:#288435">4TY</i><i style="top:135px;height:25px;color:#3caf4e">T0%YC</i><i style="top:160px;height:10px;color:#278234">V$</i><i style="top:170px;height:20px;color:#37a548">M4D2</i><i style="top:190px;height:15px;color:#36a246">4Z0</i><i style="top:205px;height:25px;color:#38a749">3AF+E</i><i style="top:230px;height:10px;color:#267f33">KH</i><i style="top:240px;height:25px;color:#35a145">B=7Y7</i><i style="top:265px;height:25px;color:#30953f">E5DHA</i></p><p style="left:400px"><i style="top:-3px;height:15px;color:#3aaa4b">9:*</i><i style="top:12px;height:10px;color:#38a749">2#</i><i style="top:22px;height:15px;color:#2c8e3b">:@8</i><i style="top:37px;height:15px;color:#2d903c">T0%</i><i style="top:52px;height:25px;color:#2d903c">Z8REK</i><i style="top:77px;height:15px;color:#349e44">V+1</i><i style="top:92px;height:15px;color:#2d903c">8&A</i><i style="top:107px;height:5px;color:#3db04f">6</i><i style="top:112px;height:25px;color:#35a045">DF:$6</i><i style="top:137px;height:15px;color:#3db14f">@FM</i><i style="top:152px;height:20px;color:#3bad4d">9&0Z</i><i style="top:172px;height:25px;color:#39a84a">&CD4U</i><i style="top:197px;height:5px;color:#319941">B</i><i style="top:202px;height:15px;color:#2e923d">YR+</i><i style="top:217px;height:25px;color:#3aab4b">KVA5P</i><i style="top:267px;height:10px;color:#2b8c39">&$</i><i style="top:292px;height:20px;color:#2e923d">K*TD</i><i style="top:312px;height:15px;color:#3bac4c">ZKE</i></p><p style="left:406px"><i style="top:0px;height:15px;color:#38a648">R@8</i><i style="top:15px;height:15px;color:#35a145">0%F</i><i style="top:40px;height:15px;color:#37a548">3U+</i><i style="top:55px;height:10px;color:#35a145">:8</i><i style="top:65px;height:5px;color:#2b8b39">E</i><i style="top:70px;height:15px;color:#39a94a">96E</i><i style="top:85px;height:15px;color:#47c25a">N=Z</i><i style="top:100px;height:5px;color:#49c65d">@</i><i style="top:105px;height:20px;color:#319941">XT8A</i><i style="top:125px;height:20px;color:#36a347">N0NV</i><i style="top:145px;height:20px;color:#339d43">:9DR</i><i style="top:165px;height:10px;color:#319840">9H</i><i style="top:175px;height:5px;color:#2e913c">T</i><i style="top:180px;height:5px;color:#3eb250">L</i><i style="top:210px;height:20px;color:#35a145">L=EH</i><i style="top:230px;height:10px;color:#49c75d">LD</i><i style="top:240px;height:25px;color:#30953f">8*Y&7</i><i style="top:265px;height:10px;color:#319740">#F</i><i style="top:300px;height:15px;color:#43bc56">*P0</i></p><p style="left:413px"><i style="top:108px;height:15px;color:#50d366">10L</i><i style="top:123px;height:20px;color:#319840">49@3</i><i style="top:213px;height:15px;color:#3eb250">54C</i><i style="top:298px;height:20px;color:#3fb350">+8H7</i></p><p style="left:418px"><i style="top:-4px;height:20px;color:#247b31">ZPUV</i><i style="top:16px;height:15px;color:#278134">D99</i><i style="top:31px;height:25px;color:#247a30">CELAY</i><i style="top:56px;height:5px;color:#1f6c29">0</i><i style="top:61px;height:25px;color:#23782f">747AF</i><i style="top:86px;height:20px;color:#1b6325">X&HX</i><i style="top:106px;height:5px;color:#23782f">$</i><i style="top:111px;height:25px;color:#1b6225">9%28F</i><i style="top:136px;height:15px;color:#267e32">XK0</i><i style="top:151px;height:10px;color:#288335">@R</i><i style="top:161px;height:10px;color:#1d6727">$R</i><i style="top:171px;height:5px;color:#278234">&</i><i style="top:176px;height:10px;color:#288335">$2</i><i style="top:221px;height:10px;color:#1c6426">Y+</i><i style="top:231px;height:5px;color:#1d6827">:</i><i style="top:236px;height:15px;color:#288435">ZV:</i><i style="top:266px;height:15px;color:#1b6325">XUU</i><i style="top:281px;height:10px;color:#20702b">Y&</i><i style="top:301px;height:10px;color:#1b6225">65</i></p><p style="left:424px"><i style="top:-2px;height:10px;color:#1c6627">T&</i><i style="top:8px;height:10px;color:#20712c">BU</i><i style="top:18px;height:5px;color:#23772f">H</i><i style="top:23px;height:15px;color:#22762e">+Z2</i><i style="top:38px;height:5px;color:#1d6928">@</i><i style="top:43px;height:10px;color:#20702b">@L</i><i style="top:53px;height:10px;color:#195b22">&H</i><i style="top:63px;height:5px;color:#23772f">1</i><i style="top:68px;height:20px;color:#1a6024">ZNDE</i><i style="top:88px;height:15px;color:#21732d">3LY</i><i style="top:103px;height:25px;color:#1e6a28">*RB85</i><i style="top:128px;height:5px;color:#1f6d2a">M</i><i style="top:133px;height:20px;color:#1e6b29">17Z2</i><i style="top:153px;height:5px;color:#195c22">$</i><i style="top:158px;height:15px;color:#195c22">1XZ</i><i style="top:173px;height:15px;color:#20712c">E6$</i><i style="top:208px;height:15px;color:#22762e">5UL</i><i style="top:223px;height:25px;color:#247930">K7@DT</i><i style="top:248px;height:5px;color:#23782f">D</i><i style="top:253px;height:5px;color:#1f6c29">C</i><i style="top:258px;height:25px;color:#1b6325">+H%Z$</i><i style="top:323px;height:20px;color:#21722c">Z9A:</i></p><p style="left:431px"><i style="top:-4px;height:25px;color:#21722c">1Z30D</i><i style="top:21px;height:25px;color:#2f943e">B&@MT</i><i style="top:46px;height:25px;color:#2c8e3b">=Y9E:</i><i style="top:71px;height:20px;color:#298636">18%4</i><i style="top:91px;height:5px;color:#2f933d">E</i><i style="top:96px;height:20px;color:#288435">177Z</i><i style="top:116px;height:20px;color:#2b8a39">F7&+</i><i style="top:136px;height:15px;color:#2d8f3b">FTK</i><i style="top:151px;height:20px;color:#20702b">CH&%</i><i style="top:171px;height:10px;color:#298737">BK</i><i style="top:181px;height:20px;color:#288536">LHNY</i><i style="top:201px;height:25px;color:#298737">EP35D</i><i style="top:226px;height:20px;color:#2b8b39">4##4</i><i style="top:246px;height:20px;color:#1f6e2a">6B@9</i><i style="top:266px;height:25px;color:#2c8c3a">H0E75</i><i style="top:316px;height:20px;color:#298636">2ZV5</i></p><p style="left:437px"><i style="top:0px;height:15px;color:#2e913c">K@9</i><i style="top:15px;height:15px;color:#288435">TD$</i><i style="top:30px;height:10px;color:#268033">L1</i><i style="top:40px;height:10px;color:#268033">DP</i><i style="top:50px;height:25px;color:#2b8b39">XFXRL</i><i style="top:75px;height:15px;color:#2f933d">=81</i><i style="top:90px;height:5px;color:#22762e">Y</i><i style="top:100px;height:5px;color:#1f6e2a">Z</i><i style="top:105px;height:20px;color:#22742d">KDCX</i><i style="top:125px;height:20px;color:#1f6e2a">:B2P</i><i style="top:145px;height:10px;color:#21732d">LA</i><i style="top:155px;height:5px;color:#2e923d">1</i><i style="top:160px;height:25px;color:#22742d">DR188</i><i style="top:185px;height:15px;color:#23782f">CUL</i><i style="top:220px;height:25px;color:#22762e">LCE3:</i><i style="top:245px;height:10px;color:#247930">DE</i><i style="top:255px;height:25px;color:#2a8938">0$AH#</i><i style="top:280px;height:10px;color:#21712c">#N</i><i style="top:290px;height:20px;color:#278134">UF57</i><i style="top:310px;height:25px;color:#1f6c29">XD&7$</i></p><p style="left:443px"><i style="top:-1px;height:10px;color:#329a41">9#</i><i style="top:9px;height:25px;color:#2c8e3b">UDEVE</i><i style="top:34px;height:20px;color:#44bd57">8164</i><i style="top:54px;height:20px;color:#2f943e">0#1X</i><i style="top:74px;height:5px;color:#2c8c3a">2</i><i style="top:79px;height:25px;color:#2f943e">VL5AA</i><i style="top:104px;height:15px;color:#44bd57">4&2</i><i style="top:119px;height:15px;color:#2d903c">XPK</i><i style="top:134px;height:20px;color:#42b954">Z@B*</i><i style="top:154px;height:10px;color:#42ba55">&:</i><i style="top:164px;height:10px;color:#2f943e">&M</i><i style="top:174px;height:20px;color:#2a8837">CC0M</i><i style="top:194px;height:25px;color:#38a648">N6CK$</i><i style="top:244px;height:15px;color:#3db14f">X14</i><i style="top:259px;height:25px;color:#43bc56">UU$A=</i><i style="top:284px;height:20px;color:#349e44">6RNN</i><i style="top:319px;height:5px;color:#38a648">N</i></p><p style="left:449px"><i style="top:-1px;height:10px;color:#2c8d3a">CY</i><i style="top:9px;height:20px;color:#2b8b39">MML7</i><i style="top:29px;height:20px;color:#3aaa4b">8MA@</i><i style="top:49px;height:20px;color:#3bac4c">DU0E</i><i style="top:69px;height:5px;color:#35a045">0</i><i style="top:74px;height:20px;color:#2c8e3b">A=LH</i><i style="top:114px;height:5px;color:#36a246">*</i><i style="top:119px;height:20px;color:#257c31">1EZ@</i><i style="top:139px;height:20px;color:#35a045">V:8Z</i><i style="top:159px;height:25px;color:#3aab4b">@2*AT</i><i style="top:184px;height:15px;color:#3db14f">9E3</i><i style="top:199px;height:5px;color:#329941">V</i><i style="top:204px;height:15px;color:#38a648">0HH</i><i style="top:219px;height:25px;color:#36a246">5N$66</i><i style="top:244px;height:15px;color:#35a145">7V7</i><i style="top:259px;height:20px;color:#39a94a">+BBN</i><i style="top:279px;height:20px;color:#2b8b39">K3$D</i><i style="top:304px;height:15px;color:#2a8938">V3+</i><i style="top:319px;height:10px;color:#39a84a">AN</i></p><p style="left:454px"><i style="top:-1px;height:15px;color:#45bf58">57C</i><i style="top:14px;height:20px;color:#43bc56">Y:AE</i><i style="top:34px;height:20px;color:#2f933d">LX*Z</i><i style="top:54px;height:10px;color:#43bc56">C*</i><i style="top:64px;height:20px;color:#4dcd61">7:CB</i><i style="top:84px;height:25px;color:#2e913c">N15PX</i><i style="top:109px;height:10px;color:#39a84a">EF</i><i style="top:119px;height:25px;color:#40b552">@V%NX</i><i style="top:144px;height:10px;color:#42b954">CE</i><i style="top:154px;height:20px;color:#339c42">PRCK</i><i style="top:174px;height:10px;color:#45be58">KX</i><i style="top:184px;height:15px;color:#46c059">:A9</i><i style="top:219px;height:25px;color:#4dcd62">L:3%*</i><i style="top:244px;height:20px;color:#3bad4d">&ZR7</i><i style="top:264px;height:25px;color:#329b42">LDM60</i><i style="top:299px;height:5px;color:#349e44">=</i><i style="top:304px;height:5px;color:#329941">%</i><i style="top:309px;height:5px;color:#3fb451">3</i></p><p style="left:459px"><i style="top:-5px;height:15px;color:#278134">LRE</i><i style="top:10px;height:15px;color:#319840">N1U</i><i style="top:25px;height:20px;color:#339c43">DA+C</i><i style="top:45px;height:20px;color:#35a045">T5K9</i><i style="top:65px;height:25px;color:#288335">C7ET$</i><i style="top:90px;height:20px;color:#2b8b39">#FZP</i><i style="top:110px;height:15px;color:#2c8d3a">8AR</i><i style="top:125px;height:25px;color:#288435">*E1*N</i><i style="top:150px;height:25px;color:#2a8938">7$*%:</i><i style="top:195px;height:10px;color:#2c8c3a">FB</i><i style="top:220px;height:15px;color:#35a045">ET:</i><i style="top:235px;height:5px;color:#278234">0</i><i style="top:240px;height:25px;color:#247b31">P6P%&</i><i style="top:290px;height:15px;color:#2c8e3b">6$T</i><i style="top:320px;height:25px;color:#2d903c">:*2HV</i></p><p style="left:465px"><i style="top:-3px;height:15px;color:#4ccc61">*A$</i><i style="top:12px;height:20px;color:#39a94a">H%2$</i><i style="top:32px;height:10px;color:#48c55c">Z7</i><i style="top:42px;height:25px;color:#46c059">8K&X=</i><i style="top:67px;height:25px;color:#3caf4e">@0UD8</i><i style="top:92px;height:5px;color:#3eb350">M</i><i style="top:97px;height:25px;color:#3fb350">6R31L</i><i style="top:122px;height:20px;color:#339c42">=71%</i><i style="top:142px;height:20px;color:#3bac4c">LP%:</i><i style="top:202px;height:5px;color:#36a246">Y</i><i style="top:207px;height:25px;color:#54d869">E30N@</i><i style="top:232px;height:10px;color:#319941">:4</i><i style="top:242px;height:25px;color:#30963f">N:M$R</i><i style="top:267px;height:10px;color:#319840">KD</i><i style="top:302px;height:20px;color:#3db14f">$30C</i><i style="top:322px;height:10px;color:#4fd063">$=</i></p><p style="left:471px"><i style="top:-4px;height:15px;color:#1d6727">$ER</i><i style="top:11px;height:25px;color:#247b31">C@E9=</i><i style="top:36px;height:25px;color:#267e32">D@UF2</i><i style="top:86px;height:25px;color:#1c6426">1EY0L</i><i style="top:111px;height:5px;color:#21722c">L</i><i style="top:116px;height:20px;color:#1c6627">3%7M</i><i style="top:136px;height:20px;color:#247b31">RZ$Y</i><i style="top:156px;height:10px;color:#1b6124">D9</i><i style="top:166px;height:15px;color:#1e6928">5*7</i><i style="top:181px;height:5px;color:#1f6d2a">#</i><i style="top:186px;height:10px;color:#20712c">D@</i><i style="top:196px;height:15px;color:#1b6325">=*Y</i><i style="top:211px;height:10px;color:#21732d">MZ</i><i style="top:221px;height:20px;color:#22762e">R1$A</i><i style="top:246px;height:10px;color:#1d6828">RU</i><i style="top:301px;height:20px;color:#247a30">@R25</i></p><p style="left:476px"><i style="top:-5px;height:20px;color:#49c65d">VXDV</i><i style="top:15px;height:20px;color:#37a447">UL%#</i><i style="top:35px;height:5px;color:#319740">$</i><i style="top:40px;height:15px;color:#45bf58">C6Y</i><i style="top:55px;height:20px;color:#35a145">H0HV</i><i style="top:75px;height:15px;color:#3bac4c">V57</i><i style="top:90px;height:10px;color:#3bad4d">=N</i><i style="top:100px;height:15px;color:#3bad4d">55M</i><i style="top:115px;height:10px;color:#319840">LU</i><i style="top:125px;height:10px;color:#46c059">F4</i><i style="top:135px;height:20px;color:#39a84a">05&Y</i><i style="top:155px;height:10px;color:#2b8a38">CR</i><i style="top:165px;height:5px;color:#2b8b39">V</i><i style="top:170px;height:5px;color:#45bf58">@</i><i style="top:175px;height:10px;color:#45bf58">&H</i><i style="top:185px;height:10px;color:#3bac4c">44</i><i style="top:195px;height:15px;color:#44bd57">*2&</i><i style="top:210px;height:5px;color:#45bf58">%</i><i style="top:215px;height:5px;color:#35a045">@</i><i style="top:220px;height:5px;color:#38a648">+</i><i style="top:225px;height:10px;color:#48c45b">T1</i><i style="top:250px;height:20px;color:#41b854">##:T</i><i style="top:295px;height:5px;color:#319840">A</i><i style="top:300px;height:10px;color:#39a94a">YM</i></p><p style="left:481px"><i style="top:-1px;height:15px;color:#36a246">704</i><i style="top:14px;height:5px;color:#46c059">&</i><i style="top:19px;height:20px;color:#44bd57">*%AE</i><i style="top:39px;height:10px;color:#298737">C%</i><i style="top:49px;height:5px;color:#298737">Z</i><i style="top:54px;height:5px;color:#339c43">C</i><i style="top:59px;height:5px;color:#36a246">:</i><i style="top:64px;height:25px;color:#2c8c3a">CFN0P</i><i style="top:89px;height:10px;color:#45bf58">#M</i><i style="top:99px;height:25px;color:#35a045">1VMF%</i><i style="top:124px;height:10px;color:#36a246">BM</i><i style="top:134px;height:25px;color:#3fb350">L4FRH</i><i style="top:159px;height:25px;color:#43bb56">*340P</i><i style="top:194px;height:10px;color:#319840">RR</i><i style="top:204px;height:25px;color:#2c8c3a">5Y*VV</i><i style="top:229px;height:5px;color:#2f933d">L</i><i style="top:234px;height:20px;color:#37a548">P=%M</i><i style="top:254px;height:10px;color:#339d43">BY</i><i style="top:264px;height:5px;color:#3bad4d">%</i><i style="top:304px;height:20px;color:#39a84a">F*3:</i></p><p style="left:486px"><i style="top:-5px;height:15px;color:#185921">R91</i><i style="top:165px;height:5px;color:#185820">H</i><i style="top:240px;height:10px;color:#195d23">1Z</i><i style="top:305px;height:5px;color:#175720">+</i></p><p style="left:492px"><i style="top:-4px;height:20px;color:#1c6526">KMB1</i><i style="top:16px;height:5px;color:#1c6426">L</i><i style="top:21px;height:20px;color:#16541f">RT$@</i><i style="top:41px;height:25px;color:#16541f">0PZ+:</i><i style="top:66px;height:25px;color:#1a6024">%KAZB</i><i style="top:91px;height:10px;color:#1c6526">&K</i><i style="top:136px;height:25px;color:#1b6225">32A$X</i><i style="top:161px;height:15px;color:#17551f">&76</i><i style="top:176px;height:20px;color:#1c6627">2M4E</i><i style="top:196px;height:5px;color:#16541f">F</i><i style="top:216px;height:20px;color:#1b6124">TL#8</i><i style="top:281px;height:10px;color:#1f6c29">N9</i><i style="top:291px;height:20px;color:#175620">%0BE</i><i style="top:311px;height:20px;color:#195c22">L2@@</i></p><p style="left:497px"><i style="top:-1px;height:25px;color:#20702b">9626N</i><i style="top:24px;height:15px;color:#20702b">6T6</i><i style="top:39px;height:20px;color:#1f6d2a">6MA#</i><i style="top:59px;height:10px;color:#1e6a28">CM</i><i style="top:69px;height:25px;color:#1a6024">*RCT5</i><i style="top:94px;height:15px;color:#1e6a28">83&</i><i style="top:109px;height:15px;color:#195b22">5+F</i><i style="top:124px;height:10px;color:#21732d">9B</i><i style="top:134px;height:10px;color:#21732d">C4</i><i style="top:154px;height:5px;color:#22752e">N</i><i style="top:159px;height:10px;color:#22762e">H2</i><i style="top:169px;height:15px;color:#1c6627">Z87</i><i style="top:184px;height:5px;color:#206f2b">9</i><i style="top:189px;height:25px;color:#1a5e23">2ARB&</i><i style="top:214px;height:15px;color:#1b6124">894</i><i style="top:269px;height:25px;color:#21722c">ADF*X</i><i style="top:309px;height:25px;color:#22742d">HUMTE</i></p></div>
  <div class="a" style="left:20px;top:16px;width:32px;height:32px;border-radius:8px;background:#137f77"></div>
  <div class="a" style="left:0;top:69px;width:500px;text-align:center;font-size:24px;line-height:26px;color:#fff">Will AI take over the world?</div>
  <div class="a" style="left:20px;top:148px;width:460px;height:50px;background:rgba(42,150,248,0.83)"></div>
  <div class="a" style="left:32px;top:165px;font-size:18px;line-height:22px;color:#fff">Yes</div>
  <div class="a" style="left:380px;top:165px;width:87px;text-align:right;font-size:18px;line-height:22px;color:#fff">100%</div>
  <div class="a" style="left:20px;top:207px;width:460px;height:51px;background:rgba(78,76,76,0.72)"></div>
  <div class="a" style="left:32px;top:224px;font-size:18px;line-height:22px;color:#fff">No</div>
  <div class="a" style="left:380px;top:224px;width:87px;text-align:right;font-size:18px;line-height:22px;color:#fff">0%</div>
  <div class="a" style="left:20px;top:285px;font-size:14px;line-height:18px;color:#fff">1 Response</div>
</div>
<!-- floating toolbar -->
<div class="a" style="left:700px;top:32px;width:108px;height:39px;background:#1e1e1e"></div>
<svg width="1507" height="1006" viewBox="0 0 1507 1006" style="left:0;top:0;pointer-events:none"><g fill="none" stroke="#fff" stroke-width="1.25"><path d="M21.8 109.8H28.6V123.4H21.8ZM21.8 116.5H35.9V123.4H28.6"/><path d="M33.6 107.2L37.7 111.3L33.6 115.4L29.5 111.3Z"/><path d="M20.6 160.5L28.9 156.4L37.3 160.5L28.9 164.6ZM20.6 164L28.9 168.1L37.3 164M20.6 167.5L28.9 171.5L37.3 167.5"/><path d="M23 203.8H34M28.5 221V206.8M23.2 212L28.5 206.8L33.8 212"/><circle cx="28.9" cy="259.8" r="8.4"/><path d="M24.3 262.4Q28.9 267.6 33.5 262.4"/><path d="M37.02 983.05 L36.16 985.12 L33.83 984.66 L32.66 985.83 L33.12 988.16 L31.05 989.02 L29.73 987.04 L28.07 987.04 L26.75 989.02 L24.68 988.16 L25.14 985.83 L23.97 984.66 L21.64 985.12 L20.78 983.05 L22.76 981.73 L22.76 980.07 L20.78 978.75 L21.64 976.68 L23.97 977.14 L25.14 975.97 L24.68 973.64 L26.75 972.78 L28.07 974.76 L29.73 974.76 L31.05 972.78 L33.12 973.64 L32.66 975.97 L33.83 977.14 L36.16 976.68 L37.02 978.75 L35.04 980.07 L35.04 981.73Z"/><circle cx="28.9" cy="980.9" r="3.5"/></g><circle cx="25.5" cy="257.7" r="1.05" fill="#fff"/><circle cx="32.4" cy="257.7" r="1.05" fill="#fff"/><circle cx="29" cy="932.9" r="11.9" fill="#000"/><path fill="#fff" d="M25.5 927.8H35.3V930.2H26.2Q25.9 930.2 25.9 930.6V935.2Q25.9 935.6 26.3 935.6H32.5V934.3H29.4V932H35.3V938H25Q22.9 938 22.9 935.9V929.9Q22.9 927.8 25.5 927.8Z"/><g fill="none" stroke="#2b2b2b" stroke-width="1.05"><rect x="213.9" y="99.7" width="4.3" height="7.3" rx="0.5" stroke="#1e1e1e" stroke-width="1.15"/><path d="M216.2 98.8V97.2H227.4V104" stroke="#808080" stroke-width="1.1"/><path d="M220.2 103.6H228.2L229 105.9H220.2Z" fill="#151515" stroke="none"/><rect x="233.7" y="140.6" width="14.7" height="10.8"/><rect x="235.8" y="142.5" width="10.6" height="2.1"/><path d="M235.5 146.4H240.8M235.5 149.4H240.8"/><rect x="243.4" y="146.4" width="3.1" height="3.1"/><path d="M238.5 182.4Q236.4 182.4 236.4 184.8V188Q236.4 189.4 234.2 189.6Q236.4 189.8 236.4 191.2V194.4Q236.4 196.8 238.5 196.8"/><path d="M243.2 182.4Q245.3 182.4 245.3 184.8V188Q245.3 189.4 247.6 189.6Q245.3 189.8 245.3 191.2V194.4Q245.3 196.8 243.2 196.8"/><path d="M238.5 314.4Q236.4 314.4 236.4 316.8V320Q236.4 321.4 234.2 321.6Q236.4 321.8 236.4 323.2V326.4Q236.4 328.8 238.5 328.8"/><path d="M243.2 314.4Q245.3 314.4 245.3 316.8V320Q245.3 321.4 247.6 321.6Q245.3 321.8 245.3 323.2V326.4Q245.3 328.8 243.2 328.8"/><ellipse cx="241" cy="275.3" rx="6.6" ry="3"/><path d="M234.4 275.3V280.4A6.6 3 0 0 0 247.6 280.4V275.3"/><path d="M213.6 362.8L220.9 359.5L228.2 362.8L220.9 366.1ZM213.6 365.9L220.9 369.2L228.2 365.9M213.6 369L220.9 372.3L228.2 369"/><rect x="234.9" y="403.9" width="11.6" height="11.6"/><path d="M240.70000000000002 403.9V415.5M234.9 409.7H246.5"/><rect x="254.9" y="447.9" width="11.6" height="11.6"/><path d="M260.7 447.9V459.5M254.9 453.7H266.5"/><path d="M238.7 502.3H235V490.7H239.5L241.8 493.4"/><path d="M238.9 493.8H243.3L247.1 497.6V504.8H238.9Z"/><path d="M243.3 493.8V497.6H247.1"/></g><g fill="#2b2b2b"><circle cx="217.1" cy="234.9" r="3.7"/><circle cx="221.8" cy="233.6" r="4.4"/><circle cx="225.7" cy="235.3" r="3.2"/><rect x="217.1" y="233" width="8.6" height="5.6"/></g><g fill="#fff"><circle cx="217.1" cy="234.9" r="2.6500000000000004"/><circle cx="221.8" cy="233.6" r="3.3500000000000005"/><circle cx="225.7" cy="235.3" r="2.1500000000000004"/><rect x="217.1" y="234.05" width="8.6" height="3.4999999999999996"/></g><g fill="none" stroke="#d4f7ef" stroke-width="1.7"><path d="M1290 45.8V66M1279.8 55.9H1300"/><rect x="1329.9" y="47.9" width="16.2" height="16.1" stroke-width="2"/><path d="M1387.6 46.7A9.3 9.3 0 1 1 1381.35 47.85" stroke-width="1.6"/><path d="M1378 46.4H1383.9V51" stroke-width="1.9"/><path d="M1474.6 46.6H1487.8V58L1489.4 59.5V62.9H1479.4M1474.6 46.6V62.4L1478.6 65.2V59.6L1480.3 57.9V51.1L1474.6 46.6" stroke-width="1.6"/></g><g fill="none" stroke="#62a497" stroke-width="1.6"><path d="M1425.8 47.8H1442.2V64.2H1428L1425.8 62Z"/><path d="M1428.8 47.8V55.2H1439.3V47.8"/><path d="M1429.9 64.2V58.4H1437.2V64.2"/></g><g fill="none" stroke="#fff" stroke-width="1.2"><rect x="707" y="41" width="10.9" height="3" fill="#fff" stroke="none"/><path d="M707.6 44V56.5H714"/><path d="M709.3 46.5H715M709.3 49.5H711.2M709.3 52.5H711.2" stroke-width="1.1"/><circle cx="717.4" cy="51.4" r="3.3"/><path d="M712.2 51.4H722.8M717.4 46.2V56.8" stroke-width="1"/><path d="M736 50.6H733.6V41.4H748.4V50.6H744"/><rect x="759.6" y="41.4" width="15" height="15.3" stroke-width="1.3"/><rect x="763.6" y="45.4" width="6.9" height="7" stroke-width="1.3"/><path d="M785.5 44V41.4H788.7M797.3 41.4H800.5V44M800.5 48.5V51.3H797.5M788.5 51.3H785.5V48.5" stroke-width="1.1"/><path d="M789 49.3H787.4V43.6H798.4V49.3H795" stroke-width="1.1"/></g><path fill="#fff" d="M736.8 45.3L744.9 53.7L740.8 54L737.1 56.8Z"/><path fill="#fff" d="M790.2 46.3L797 54.2L793.2 54.4L790.5 56.9Z"/><path d="M739 63.5H769M739 66.5H769" stroke="#8a8a8a" stroke-width="0.9"/><g fill="#fff"><rect x="1032" y="162.7" width="5.7" height="5.3"/><rect x="1039.6" y="149.2" width="6" height="18.8"/><rect x="1046.7" y="157.1" width="5.3" height="10.9"/></g></svg>
</body></html>
